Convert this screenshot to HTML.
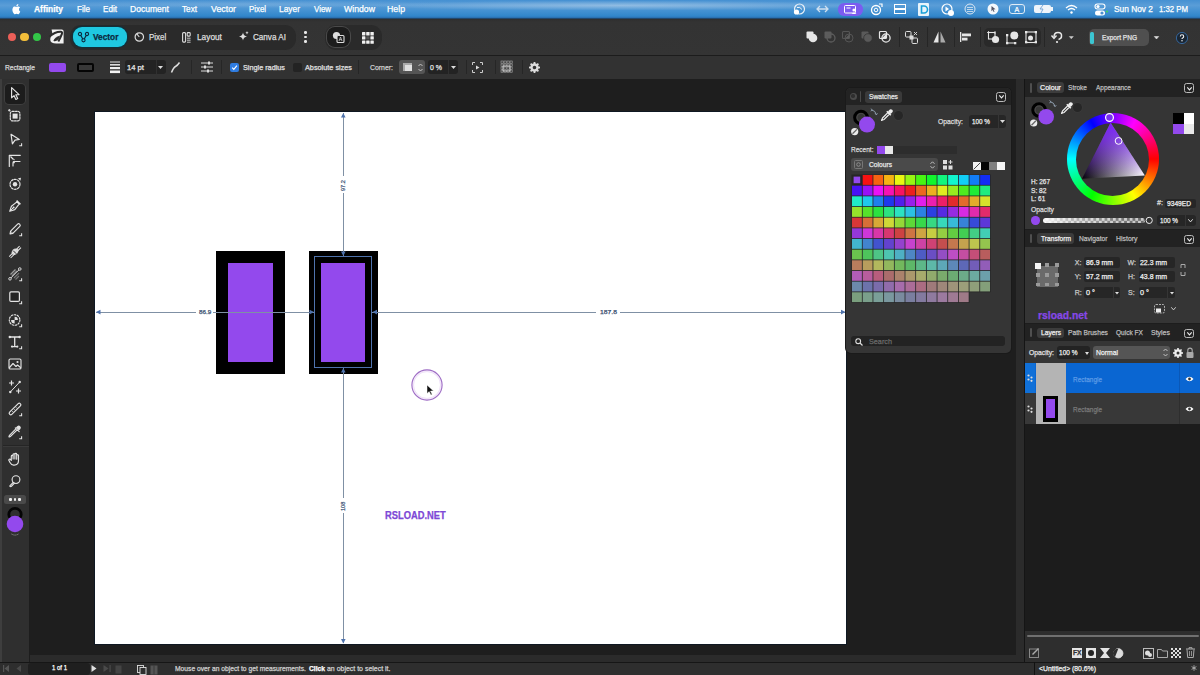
<!DOCTYPE html><html><head><meta charset="utf-8"><style>
html,body{margin:0;padding:0;}
body{width:1200px;height:675px;overflow:hidden;position:relative;background:#2f2f2f;font-family:"Liberation Sans",sans-serif;}
.t{position:absolute;white-space:nowrap;line-height:1;-webkit-text-stroke:0.25px currentColor;}
svg{overflow:visible}
</style></head><body>
<div style="position:absolute;left:0px;top:0px;width:1200px;height:19px;background:radial-gradient(ellipse 260px 5px at 620px 5.5px,rgba(210,225,240,.45),rgba(210,225,240,0)),radial-gradient(ellipse 200px 4px at 250px 4px,rgba(200,220,240,.2),rgba(200,220,240,0)),linear-gradient(180deg,#4590d2 0%,#5a9dd7 28%,#4592d2 55%,#3186ca 85%,#2a70b0 93%,#1d3044 100%);"></div>
<svg style="position:absolute;left:12px;top:4px;" width="11" height="13" viewBox="0 0 11 13"><g transform="scale(0.78)"><path d="M7.4 2.1c.5-.6.8-1.3.7-2.1-.7 0-1.4.5-1.9 1-.4.5-.8 1.3-.7 2 .8.1 1.5-.4 1.9-.9zM8.1 3.2c-1-.1-1.9.6-2.4.6-.5 0-1.3-.5-2.1-.5C2.5 3.3 1.5 4 1 5c-1.1 1.9-.3 4.8.8 6.4.5.8 1.1 1.6 2 1.6.8 0 1.1-.5 2-.5.9 0 1.2.5 2 .5.9 0 1.4-.8 1.9-1.6.6-.9.8-1.7.9-1.8 0 0-1.7-.7-1.7-2.6 0-1.6 1.3-2.3 1.4-2.4-.8-1.1-1.9-1.3-2.2-1.4z" fill="#fff"/></g></svg>
<div class="t" style="left:34px;top:4.85px;font-size:8.6px;color:#fff;font-weight:bold;transform:scaleX(0.979);transform-origin:0 0;">Affinity</div>
<div class="t" style="left:77px;top:4.85px;font-size:8.6px;color:#fff;font-weight:normal;transform:scaleX(0.938);transform-origin:0 0;">File</div>
<div class="t" style="left:103px;top:4.85px;font-size:8.6px;color:#fff;font-weight:normal;transform:scaleX(0.945);transform-origin:0 0;">Edit</div>
<div class="t" style="left:130px;top:4.85px;font-size:8.6px;color:#fff;font-weight:normal;transform:scaleX(0.995);transform-origin:0 0;">Document</div>
<div class="t" style="left:182px;top:4.85px;font-size:8.6px;color:#fff;font-weight:normal;transform:scaleX(0.951);transform-origin:0 0;">Text</div>
<div class="t" style="left:211px;top:4.85px;font-size:8.6px;color:#fff;font-weight:normal;transform:scaleX(1.025);transform-origin:0 0;">Vector</div>
<div class="t" style="left:249px;top:4.85px;font-size:8.6px;color:#fff;font-weight:normal;transform:scaleX(0.912);transform-origin:0 0;">Pixel</div>
<div class="t" style="left:279px;top:4.85px;font-size:8.6px;color:#fff;font-weight:normal;transform:scaleX(0.976);transform-origin:0 0;">Layer</div>
<div class="t" style="left:314px;top:4.85px;font-size:8.6px;color:#fff;font-weight:normal;transform:scaleX(0.920);transform-origin:0 0;">View</div>
<div class="t" style="left:344px;top:4.85px;font-size:8.6px;color:#fff;font-weight:normal;transform:scaleX(1.014);transform-origin:0 0;">Window</div>
<div class="t" style="left:387px;top:4.85px;font-size:8.6px;color:#fff;font-weight:normal;transform:scaleX(1.018);transform-origin:0 0;">Help</div>
<svg style="position:absolute;left:793px;top:3px;" width="13" height="12" viewBox="0 0 13 12"><circle cx="6.5" cy="6" r="5" fill="none" stroke="#e8f0f8" stroke-width="1.2"/><path d="M4 4.5q3 -1 5 2" fill="none" stroke="#e8f0f8" stroke-width="1"/><circle cx="3.5" cy="9" r="2.6" fill="#fff"/></svg>
<svg style="position:absolute;left:816px;top:4px;" width="13" height="10" viewBox="0 0 13 10"><path d="M1 5h11M4 2l-3 3 3 3M9 2l3 3-3 3" fill="none" stroke="#cfe0f0" stroke-width="1.3"/></svg>
<div style="position:absolute;left:838px;top:3px;width:25px;height:13px;background:#7b5cf0;border-radius:6px;"></div>
<svg style="position:absolute;left:844px;top:5px;" width="14" height="9" viewBox="0 0 14 9"><rect x="0.5" y="0.5" width="11" height="7.5" rx="1" fill="none" stroke="#fff" stroke-width="1"/><rect x="2.5" y="2.5" width="4" height="1" fill="#fff"/><circle cx="10" cy="5" r="1.6" fill="#fff"/><path d="M7.5 9q2.5-3 5 0z" fill="#fff"/></svg>
<svg style="position:absolute;left:870px;top:3px;" width="14" height="12" viewBox="0 0 14 12"><circle cx="6" cy="7" r="4.5" fill="none" stroke="#fff" stroke-width="1.3"/><circle cx="6" cy="7" r="1.8" fill="none" stroke="#fff" stroke-width="1"/><path d="M9 1l3 0 0 3" fill="none" stroke="#fff" stroke-width="1.2"/></svg>
<svg style="position:absolute;left:894px;top:4px;" width="13" height="11" viewBox="0 0 13 11"><rect x="0.5" y="0.5" width="11" height="9" fill="none" stroke="#fff" stroke-width="1"/><rect x="0.5" y="4" width="11" height="2" fill="#fff"/></svg>
<div style="position:absolute;left:918px;top:3px;width:11px;height:13px;background:#e8f4fb;border-radius:1px;"></div>
<svg style="position:absolute;left:920px;top:5px;" width="8" height="9" viewBox="0 0 8 9"><path d="M1.5 1h2.5a3 3 0 0 1 0 7h-2.5z" fill="none" stroke="#1aa0d8" stroke-width="1.6"/></svg>
<svg style="position:absolute;left:941px;top:3px;" width="14" height="13" viewBox="0 0 14 13"><circle cx="6" cy="6" r="5" fill="none" stroke="#fff" stroke-width="1.2"/><path d="M4.5 3.5l3.5 2.5-3.5 2.5z" fill="#fff"/><circle cx="10" cy="10" r="3" fill="#fff"/></svg>
<svg style="position:absolute;left:964px;top:3px;" width="12" height="12" viewBox="0 0 12 12"><circle cx="6" cy="6" r="5" fill="none" stroke="#dce8f4" stroke-width="1"/><path d="M3 4.5h6M3 6.5h6M3 8.5h6" stroke="#dce8f4" stroke-width="0.8"/></svg>
<svg style="position:absolute;left:987px;top:3px;" width="12" height="12" viewBox="0 0 12 12"><circle cx="6" cy="6" r="5.5" fill="#f4f8fc"/><path d="M4.5 3l4 3.2-2 .3 1 2.2-.8.4-1-2.2-1.3 1.3z" fill="#556"/></svg>
<div style="position:absolute;left:1009px;top:4px;width:16px;height:10px;border:1px solid #e0ecf6;border-radius:3px;box-sizing:border-box;"></div>
<div class="t" style="left:1014.5px;top:5.83px;font-size:7px;color:#fff;font-weight:normal;">A</div>
<div style="position:absolute;left:1034px;top:5px;width:17px;height:8px;background:#eef4fa;border-radius:2px;"></div>
<div style="position:absolute;left:1051px;top:7px;width:1.5px;height:4px;background:#eef4fa;"></div>
<svg style="position:absolute;left:1038px;top:5px;" width="8" height="8" viewBox="0 0 8 8"><path d="M5 0l-3 4h3l-2 4" fill="none" stroke="#7aa8d8" stroke-width="1"/></svg>
<svg style="position:absolute;left:1065px;top:4px;" width="13" height="10" viewBox="0 0 13 10"><path d="M1 4q5.5-5 11 0" fill="none" stroke="#fff" stroke-width="1.3"/><path d="M3 6q3.5-3 7 0" fill="none" stroke="#fff" stroke-width="1.3"/><circle cx="6.5" cy="8.5" r="1.2" fill="#fff"/></svg>
<svg style="position:absolute;left:1094px;top:3px;" width="14" height="13" viewBox="0 0 14 13"><rect x="1" y="1" width="10" height="5" rx="2.5" fill="none" stroke="#fff" stroke-width="1.1"/><circle cx="4" cy="3.5" r="1.6" fill="#fff"/><rect x="1" y="7.5" width="10" height="5" rx="2.5" fill="#fff"/><circle cx="8" cy="10" r="1.6" fill="#4a8fd0"/><circle cx="13" cy="8.5" r="1.1" fill="#3fd060"/></svg>
<div class="t" style="left:1114px;top:4.85px;font-size:8.6px;color:#fff;font-weight:normal;transform:scaleX(0.971);transform-origin:0 0;">Sun Nov 2</div>
<div class="t" style="left:1159px;top:4.85px;font-size:8.6px;color:#fff;font-weight:normal;transform:scaleX(0.906);transform-origin:0 0;">1:32 PM</div>
<div style="position:absolute;left:0px;top:19px;width:1200px;height:36px;background:linear-gradient(180deg,#2e2e2e 0px,#333 3px,#343434 100%);"></div>
<div style="position:absolute;left:0px;top:55px;width:1200px;height:1px;background:#1c1c1c;"></div>
<div style="position:absolute;left:7.7px;top:32.7px;width:8.6px;height:8.6px;background:#ec5f58;border-radius:50%;"></div>
<div style="position:absolute;left:20.2px;top:32.7px;width:8.6px;height:8.6px;background:#f3be3a;border-radius:50%;"></div>
<div style="position:absolute;left:32.7px;top:32.7px;width:8.6px;height:8.6px;background:#33c748;border-radius:50%;"></div>
<svg style="position:absolute;left:50px;top:29.3px;" width="14" height="15" viewBox="0 0 14 15"><path d="M1.6 0.4H11.8Q13.6 0.4 13.6 2.2V14.6H6.4Q0.2 14.6 0.2 10.2Q0.2 7.2 2.6 5.6L1.6 0.4z" fill="#f2f2f2"/><path d="M-0.5 7.6Q4.5 2.8 10.6 2.7Q12.6 2.8 11.9 4.8Q10.6 8.4 8.3 12.6" fill="none" stroke="#2c2c2c" stroke-width="2"/><path d="M3.4 11.8Q4.4 8.4 10.2 6.4Q9.2 10 7 11.6Q4.8 12.9 3.4 11.8z" fill="#2c2c2c"/></svg>
<div style="position:absolute;left:70px;top:24.5px;width:226px;height:25px;background:#2a2a2a;border-radius:11px;"></div>
<div style="position:absolute;left:73px;top:26.7px;width:54px;height:20px;background:#1fc8e1;border-radius:9px;box-shadow:0 0 0 1.2px #12303a;"></div>
<svg style="position:absolute;left:78px;top:32px;" width="11" height="10" viewBox="0 0 11 10"><path d="M2 2L5.5 8.3M9 2L5.5 8.3" stroke="#0c2a3e" stroke-width="1.2"/><circle cx="2" cy="2" r="1.6" fill="#1fc8e1" stroke="#0c2a3e" stroke-width="1.1"/><circle cx="9" cy="2" r="1.6" fill="#1fc8e1" stroke="#0c2a3e" stroke-width="1.1"/><circle cx="5.5" cy="8.3" r="1.6" fill="#1fc8e1" stroke="#0c2a3e" stroke-width="1.1"/></svg>
<div class="t" style="left:93.3px;top:32.85px;font-size:8.6px;color:#0c2a40;font-weight:bold;transform:scaleX(0.966);transform-origin:0 0;">Vector</div>
<svg style="position:absolute;left:134px;top:32px;" width="11" height="10" viewBox="0 0 11 10"><circle cx="5.3" cy="5" r="4.2" fill="none" stroke="#ddd" stroke-width="1.2"/><path d="M5.3 5L3 2.2" stroke="#ddd" stroke-width="1.1"/></svg>
<div class="t" style="left:148.7px;top:32.95px;font-size:8.4px;color:#ddd;font-weight:normal;transform:scaleX(0.950);transform-origin:0 0;">Pixel</div>
<svg style="position:absolute;left:182px;top:31.5px;" width="9" height="11" viewBox="0 0 9 11"><rect x="0.6" y="0.6" width="3" height="9.5" rx="1" fill="none" stroke="#ddd" stroke-width="1.1"/><rect x="5.2" y="0.6" width="3" height="3.5" rx=".8" fill="none" stroke="#ddd" stroke-width="1.1"/><path d="M5 6.2h3.6M5 8.2h3.6M5 10.2h3.6" stroke="#ddd" stroke-width="0.9"/></svg>
<div class="t" style="left:197px;top:32.95px;font-size:8.4px;color:#ddd;font-weight:normal;transform:scaleX(0.991);transform-origin:0 0;">Layout</div>
<svg style="position:absolute;left:238px;top:31px;" width="11" height="11" viewBox="0 0 11 11"><path d="M5 1.5q.5 3.5 4 4q-3.5.5-4 4q-.5-3.5-4-4q3.5-.5 4-4z" fill="#ddd"/><path d="M9 0q.2 1.5 1.6 1.7q-1.4.2-1.6 1.7q-.2-1.5-1.6-1.7q1.4-.2 1.6-1.7z" fill="#ddd"/></svg>
<div class="t" style="left:253px;top:32.95px;font-size:8.4px;color:#ddd;font-weight:normal;transform:scaleX(0.968);transform-origin:0 0;">Canva AI</div>
<div style="position:absolute;left:304.3px;top:31.400000000000002px;width:2.5px;height:2.5px;background:#e8e8e8;border-radius:50%;"></div>
<div style="position:absolute;left:304.3px;top:35.9px;width:2.5px;height:2.5px;background:#e8e8e8;border-radius:50%;"></div>
<div style="position:absolute;left:304.3px;top:40.4px;width:2.5px;height:2.5px;background:#e8e8e8;border-radius:50%;"></div>
<div style="position:absolute;left:325px;top:24.5px;width:57px;height:25px;background:#2a2a2a;border-radius:11px;"></div>
<div style="position:absolute;left:327px;top:27px;width:23px;height:20px;background:#1c1c1c;border-radius:8px;box-shadow:0 0 0 1px #4a4a4a;"></div>
<svg style="position:absolute;left:332px;top:31px;" width="13" height="12" viewBox="0 0 13 12"><circle cx="4.5" cy="4.5" r="3.6" fill="#ddd"/><rect x="5" y="4.5" width="7" height="7" rx="1" fill="#1c1c1c" stroke="#ddd" stroke-width="1.1"/><path d="M7 10l1.5-4 1.5 4M7.6 8.6h1.8" stroke="#ddd" stroke-width=".7" fill="none"/></svg>
<svg style="position:absolute;left:361.5px;top:31.5px;" width="12" height="12" viewBox="0 0 12 12"><rect x="0" y="0" width="3.4" height="3.4" rx=".5" fill="#f0f0f0"/><rect x="0" y="4.2" width="3.4" height="3.4" rx=".5" fill="#f0f0f0"/><rect x="0" y="8.4" width="3.4" height="3.4" rx=".5" fill="#f0f0f0"/><rect x="4.2" y="0" width="3.4" height="3.4" rx=".5" fill="#f0f0f0"/><rect x="4.2" y="4.2" width="3.4" height="3.4" rx=".5" fill="#555"/><rect x="4.2" y="8.4" width="3.4" height="3.4" rx=".5" fill="#f0f0f0"/><rect x="8.4" y="0" width="3.4" height="3.4" rx=".5" fill="#f0f0f0"/><rect x="8.4" y="4.2" width="3.4" height="3.4" rx=".5" fill="#f0f0f0"/><rect x="8.4" y="8.4" width="3.4" height="3.4" rx=".5" fill="#f0f0f0"/></svg>
<svg style="position:absolute;left:806px;top:31px;" width="12" height="12" viewBox="0 0 12 12"><rect x="0.5" y="0.5" width="7" height="7" rx="1" fill="#e6e6e6"/><circle cx="7" cy="7" r="4.3" fill="#e6e6e6"/></svg>
<svg style="position:absolute;left:824px;top:31px;" width="12" height="12" viewBox="0 0 12 12"><rect x="0.5" y="0.5" width="7" height="7" rx="1" fill="#5c5c5c"/><circle cx="7" cy="7" r="4" fill="none" stroke="#5c5c5c" stroke-width="1.3"/></svg>
<svg style="position:absolute;left:842px;top:31px;" width="12" height="12" viewBox="0 0 12 12"><rect x="0.5" y="0.5" width="7" height="7" rx="1" fill="none" stroke="#555" stroke-width="1.1"/><path d="M3 7.5h4.5V3" fill="#5c5c5c"/><circle cx="7" cy="7" r="4" fill="none" stroke="#555" stroke-width="1"/></svg>
<svg style="position:absolute;left:861px;top:31px;" width="12" height="12" viewBox="0 0 12 12"><rect x="0.5" y="0.5" width="7" height="7" rx="1" fill="#5a5a5a"/><circle cx="7" cy="7" r="4.3" fill="#5a5a5a" stroke="#333" stroke-width=".8"/></svg>
<svg style="position:absolute;left:879px;top:31px;" width="12" height="12" viewBox="0 0 12 12"><rect x="0.5" y="0.5" width="7" height="7" rx="1" fill="none" stroke="#e6e6e6" stroke-width="1.2"/><circle cx="7" cy="7" r="4.1" fill="none" stroke="#e6e6e6" stroke-width="1.3"/><path d="M3 7h4V3z" fill="#e6e6e6"/></svg>
<div style="position:absolute;left:899px;top:27px;width:1px;height:20px;background:#262626;"></div>
<svg style="position:absolute;left:905px;top:31px;" width="14" height="13" viewBox="0 0 14 13"><rect x="0.5" y="0.5" width="5.5" height="5.5" rx="1" fill="none" stroke="#ddd" stroke-width="1"/><rect x="4.5" y="4.5" width="4" height="4" fill="#ddd"/><rect x="7" y="7" width="5.5" height="5.5" rx="1" fill="none" stroke="#ddd" stroke-width="1"/><path d="M9 1l3 3M12 1l-3 3" stroke="#ddd" stroke-width=".9"/></svg>
<div style="position:absolute;left:927px;top:27px;width:1px;height:20px;background:#262626;"></div>
<svg style="position:absolute;left:933px;top:31px;" width="13" height="12" viewBox="0 0 13 12"><path d="M5.5 0.5L0.5 11.5h5z" fill="#e6e6e6"/><path d="M7.5 0.5l5 11h-5z" fill="#aaa"/></svg>
<div style="position:absolute;left:954px;top:27px;width:1px;height:20px;background:#262626;"></div>
<svg style="position:absolute;left:960px;top:32px;" width="12" height="10" viewBox="0 0 12 10"><rect x="0" y="0" width="1.3" height="10" fill="#e6e6e6"/><rect x="2" y="1.5" width="9" height="2.8" fill="#e6e6e6"/><rect x="2" y="5.7" width="5.5" height="2.8" fill="#e6e6e6"/></svg>
<div style="position:absolute;left:980px;top:27px;width:1px;height:20px;background:#262626;"></div>
<div style="position:absolute;left:983.5px;top:28px;width:57px;height:18.5px;background:#292929;border-radius:5px;"></div>
<svg style="position:absolute;left:987px;top:31px;" width="13" height="13" viewBox="0 0 13 13"><rect x="1.5" y="1.5" width="6.5" height="6.5" fill="none" stroke="#e6e6e6" stroke-width="1.1"/><circle cx="8.5" cy="8.5" r="3.6" fill="#e6e6e6"/><path d="M1.5 0v3M0 1.5h3M8 0v3" stroke="#e6e6e6" stroke-width=".8"/></svg>
<svg style="position:absolute;left:1006px;top:31px;" width="13" height="13" viewBox="0 0 13 13"><circle cx="8.3" cy="4.5" r="4" fill="#e6e6e6"/><path d="M1 4v8h8" fill="none" stroke="#e6e6e6" stroke-width="1.1"/><rect x="0" y="3" width="2.3" height="2.3" fill="#e6e6e6"/><rect x="0" y="11" width="2.3" height="2.3" fill="#e6e6e6"/><rect x="8" y="11" width="2.3" height="2.3" fill="#e6e6e6"/></svg>
<svg style="position:absolute;left:1025px;top:31px;" width="12" height="13" viewBox="0 0 12 13"><rect x="1" y="1" width="10" height="10.5" fill="none" stroke="#e6e6e6" stroke-width="1.1"/><rect x="0" y="0" width="2.3" height="2.3" fill="#e6e6e6"/><rect x="9.7" y="0" width="2.3" height="2.3" fill="#e6e6e6"/><rect x="0" y="10" width="2.3" height="2.3" fill="#e6e6e6"/><rect x="9.7" y="10" width="2.3" height="2.3" fill="#e6e6e6"/><circle cx="5.5" cy="7" r="2.5" fill="#e6e6e6"/></svg>
<div style="position:absolute;left:1044px;top:27px;width:1px;height:20px;background:#262626;"></div>
<svg style="position:absolute;left:1051px;top:31px;" width="13" height="12" viewBox="0 0 13 12"><path d="M3 6q0-4.5 4-4.5t3.5 3.8q0 2.5-3 3.2" fill="none" stroke="#e8e8e8" stroke-width="1.5"/><path d="M0.5 4.5l2.5 3 2.5-3" fill="none" stroke="#e8e8e8" stroke-width="1.4"/><circle cx="6" cy="11" r="1.1" fill="#e8e8e8"/></svg>
<svg style="position:absolute;left:1068.5px;top:36px;" width="5" height="4" viewBox="0 0 5 4"><path d="M0.3 0.5l2 2.3 2-2.3z" fill="#ccc" stroke="#ccc" stroke-width=".5"/></svg>
<div style="position:absolute;left:1088.8px;top:29px;width:60.5px;height:17px;background:#4f4f4f;border-radius:5px;"></div>
<div style="position:absolute;left:1090.3px;top:32px;width:3.6px;height:12px;background:#3cc6d2;border-radius:1.5px;"></div>
<div class="t" style="left:1101.5px;top:33.98px;font-size:7.3px;color:#e4e4e4;font-weight:normal;transform:scaleX(0.899);transform-origin:0 0;">Export PNG</div>
<svg style="position:absolute;left:1153.5px;top:36px;" width="5" height="4" viewBox="0 0 5 4"><path d="M0.3 0.5l2.2 2.5 2.2-2.5z" fill="#ddd" stroke="#ddd" stroke-width=".6"/></svg>
<svg style="position:absolute;left:1175px;top:31px;" width="14" height="14" viewBox="0 0 14 14"><circle cx="7" cy="7" r="5.6" fill="#1a2633" stroke="#35659a" stroke-width="1"/><path d="M5.3 5.6q0-1.8 1.7-1.8t1.7 1.6q0 1-1.1 1.6q-.6.3-.6 1.1" fill="none" stroke="#f0f0f0" stroke-width="1.1"/><circle cx="7" cy="9.8" r=".75" fill="#f0f0f0"/></svg>
<div style="position:absolute;left:0px;top:56px;width:1200px;height:22.5px;background:#323232;"></div>
<div style="position:absolute;left:0px;top:78.5px;width:1200px;height:1px;background:#1a1a1a;"></div>
<div class="t" style="left:5px;top:64.13px;font-size:7px;color:#d8d8d8;font-weight:normal;transform:scaleX(0.952);transform-origin:0 0;">Rectangle</div>
<div style="position:absolute;left:49px;top:62.5px;width:17px;height:9.5px;background:#9349ed;border-radius:2px;"></div>
<div style="position:absolute;left:77px;top:62.5px;width:17px;height:9.5px;background:#383838;border:2px solid #050505;border-radius:2px;box-sizing:border-box;"></div>
<svg style="position:absolute;left:110px;top:61px;" width="10" height="12" viewBox="0 0 10 12"><rect x="0" y="0.5" width="10" height="1" fill="#ddd"/><rect x="0" y="3" width="10" height="1.6" fill="#ddd"/><rect x="0" y="6" width="10" height="2.2" fill="#eee"/><rect x="0" y="9.5" width="10" height="2.6" fill="#f2f2f2"/></svg>
<div style="position:absolute;left:125px;top:60px;width:40.5px;height:14px;background:#232323;border-radius:3px;"></div>
<div style="position:absolute;left:155.5px;top:60px;width:1px;height:14px;background:#303030;"></div>
<div class="t" style="left:127px;top:63.68px;font-size:7.3px;color:#e6e6e6;font-weight:normal;transform:scaleX(1.047);transform-origin:0 0;">14 pt</div>
<svg style="position:absolute;left:158px;top:65.5px;" width="5" height="3" viewBox="0 0 5 3"><path d="M0 0h5l-2.5 3z" fill="#ddd"/></svg>
<svg style="position:absolute;left:171px;top:61.5px;" width="9" height="11" viewBox="0 0 9 11"><path d="M0.5 10.5q2-5 4-6t4-4" fill="none" stroke="#ddd" stroke-width="1.5"/></svg>
<div style="position:absolute;left:191px;top:60px;width:1px;height:14px;background:#262626;"></div>
<svg style="position:absolute;left:201px;top:61px;" width="12" height="12" viewBox="0 0 12 12"><path d="M0 2h12M0 6h12M0 10h12" stroke="#ddd" stroke-width="1"/><rect x="7" y="0.5" width="2" height="3" fill="#ddd"/><rect x="3" y="4.5" width="2" height="3" fill="#ddd"/><rect x="6" y="8.5" width="2" height="3" fill="#ddd"/></svg>
<div style="position:absolute;left:221px;top:60px;width:1px;height:14px;background:#262626;"></div>
<div style="position:absolute;left:229.5px;top:62.7px;width:9px;height:9px;background:#2f7ce0;border-radius:2px;"></div>
<svg style="position:absolute;left:230.5px;top:63.7px;" width="7" height="7" viewBox="0 0 7 7"><path d="M1.2 3.6l1.6 1.7 3.1-3.7" fill="none" stroke="#fff" stroke-width="1.1"/></svg>
<div class="t" style="left:243px;top:63.78px;font-size:7.3px;color:#e0e0e0;font-weight:normal;transform:scaleX(0.995);transform-origin:0 0;">Single radius</div>
<div style="position:absolute;left:292.5px;top:62.7px;width:9px;height:9px;background:#232323;border-radius:2px;"></div>
<div class="t" style="left:305px;top:63.78px;font-size:7.3px;color:#e0e0e0;font-weight:normal;transform:scaleX(0.999);transform-origin:0 0;">Absolute sizes</div>
<div style="position:absolute;left:358px;top:60px;width:1px;height:14px;background:#262626;"></div>
<div class="t" style="left:370px;top:63.78px;font-size:7.3px;color:#d0d0d0;font-weight:normal;transform:scaleX(0.945);transform-origin:0 0;">Corner:</div>
<div style="position:absolute;left:398.5px;top:60px;width:26px;height:14px;background:#555555;border-radius:3px;"></div>
<div style="position:absolute;left:403px;top:63px;width:9px;height:8px;background:#e0e0e0;"></div>
<div style="position:absolute;left:403px;top:63px;width:9px;height:2px;background:#aaa;"></div>
<div style="position:absolute;left:403px;top:63px;width:2px;height:8px;background:#aaa;"></div>
<svg style="position:absolute;left:418px;top:62.5px;" width="5" height="9" viewBox="0 0 5 9"><path d="M0.5 3l2-2 2 2M0.5 6l2 2 2-2" fill="none" stroke="#ccc" stroke-width=".9"/></svg>
<div style="position:absolute;left:428px;top:60px;width:29.5px;height:14px;background:#232323;border-radius:3px;"></div>
<div style="position:absolute;left:448px;top:60px;width:1px;height:14px;background:#303030;"></div>
<div class="t" style="left:430px;top:63.78px;font-size:7.3px;color:#e6e6e6;font-weight:normal;transform:scaleX(0.954);transform-origin:0 0;">0 %</div>
<svg style="position:absolute;left:451px;top:65.5px;" width="5" height="3" viewBox="0 0 5 3"><path d="M0 0h5l-2.5 3z" fill="#ddd"/></svg>
<div style="position:absolute;left:466px;top:60px;width:1px;height:14px;background:#262626;"></div>
<svg style="position:absolute;left:472px;top:61.5px;" width="11" height="11" viewBox="0 0 11 11"><path d="M0.5 3V0.5H3M8 0.5h2.5V3M10.5 8v2.5H8M3 10.5H0.5V8" fill="none" stroke="#ccc" stroke-width="1"/><path d="M4 3.5l3.5 2-3.5 2z" fill="#ddd"/></svg>
<div style="position:absolute;left:495px;top:60px;width:1px;height:14px;background:#262626;"></div>
<svg style="position:absolute;left:501px;top:61px;" width="11" height="12" viewBox="0 0 11 12"><rect x="0" y="0" width="2.2" height="2.2" fill="none" stroke="#aaa" stroke-width=".6"/><rect x="0" y="3" width="2.2" height="2.2" fill="none" stroke="#aaa" stroke-width=".6"/><rect x="0" y="6" width="2.2" height="2.2" fill="none" stroke="#aaa" stroke-width=".6"/><rect x="0" y="9" width="2.2" height="2.2" fill="none" stroke="#aaa" stroke-width=".6"/><rect x="3" y="0" width="2.2" height="2.2" fill="none" stroke="#aaa" stroke-width=".6"/><rect x="3" y="3" width="2.2" height="2.2" fill="none" stroke="#aaa" stroke-width=".6"/><rect x="3" y="6" width="2.2" height="2.2" fill="none" stroke="#aaa" stroke-width=".6"/><rect x="3" y="9" width="2.2" height="2.2" fill="none" stroke="#aaa" stroke-width=".6"/><rect x="6" y="0" width="2.2" height="2.2" fill="none" stroke="#aaa" stroke-width=".6"/><rect x="6" y="3" width="2.2" height="2.2" fill="none" stroke="#aaa" stroke-width=".6"/><rect x="6" y="6" width="2.2" height="2.2" fill="none" stroke="#aaa" stroke-width=".6"/><rect x="6" y="9" width="2.2" height="2.2" fill="none" stroke="#aaa" stroke-width=".6"/><rect x="9" y="0" width="2.2" height="2.2" fill="none" stroke="#aaa" stroke-width=".6"/><rect x="9" y="3" width="2.2" height="2.2" fill="none" stroke="#aaa" stroke-width=".6"/><rect x="9" y="6" width="2.2" height="2.2" fill="none" stroke="#aaa" stroke-width=".6"/><rect x="9" y="9" width="2.2" height="2.2" fill="none" stroke="#aaa" stroke-width=".6"/><rect x="2" y="5" width="7" height="5" fill="none" stroke="#ddd" stroke-width=".8"/></svg>
<div style="position:absolute;left:522px;top:60px;width:1px;height:14px;background:#262626;"></div>
<svg style="position:absolute;left:529px;top:62px;" width="11" height="11" viewBox="0 0 11 11"><circle cx="5.5" cy="5.5" r="3" fill="none" stroke="#ddd" stroke-width="2.4"/><rect x="4.6" y="0" width="1.8" height="2.4" fill="#ddd" transform="rotate(0 5.5 5.5)"/><rect x="4.6" y="0" width="1.8" height="2.4" fill="#ddd" transform="rotate(45 5.5 5.5)"/><rect x="4.6" y="0" width="1.8" height="2.4" fill="#ddd" transform="rotate(90 5.5 5.5)"/><rect x="4.6" y="0" width="1.8" height="2.4" fill="#ddd" transform="rotate(135 5.5 5.5)"/><rect x="4.6" y="0" width="1.8" height="2.4" fill="#ddd" transform="rotate(180 5.5 5.5)"/><rect x="4.6" y="0" width="1.8" height="2.4" fill="#ddd" transform="rotate(225 5.5 5.5)"/><rect x="4.6" y="0" width="1.8" height="2.4" fill="#ddd" transform="rotate(270 5.5 5.5)"/><rect x="4.6" y="0" width="1.8" height="2.4" fill="#ddd" transform="rotate(315 5.5 5.5)"/></svg>
<div style="position:absolute;left:0px;top:79px;width:29px;height:583px;background:#2f2f2f;"></div>
<div style="position:absolute;left:0px;top:79px;width:1.5px;height:583px;background:#3e3e3e;"></div>
<div style="position:absolute;left:29px;top:79px;width:1px;height:583px;background:#1d1d1d;"></div>
<div style="position:absolute;left:5.3px;top:83.8px;width:19.6px;height:20.2px;background:#1c1c1c;border-radius:4px;box-shadow:0 0 0 1px #3e3e3e;"></div>
<svg style="position:absolute;left:7px;top:85px;" width="16" height="16" viewBox="0 0 16 16"><path d="M4.6 2.6V12.8L7 10.6l1.9 3.9 1.8-.9-1.9-3.8 3.3-.2z" stroke="#e4e4e4" stroke-width="1.15" fill="none" stroke-linejoin="round" stroke-linecap="round"/></svg>
<svg style="position:absolute;left:7px;top:108px;" width="16" height="16" viewBox="0 0 16 16"><rect x="3.3" y="3.3" width="9.6" height="9.6" rx="2.2" stroke="#e4e4e4" stroke-width="1.15" fill="none" stroke-linejoin="round" stroke-linecap="round" stroke-dasharray="1.8 1.2"/><rect x="5.6" y="5.6" width="5" height="5" fill="#e4e4e4"/><path d="M1 2.3h2.6M2.3 1v2.6" stroke="#e4e4e4" stroke-width=".9"/></svg>
<svg style="position:absolute;left:7px;top:131px;" width="16" height="16" viewBox="0 0 16 16"><path d="M4 3.2l8.3 5.3-4.3.6-2.6 3.8z" stroke="#e4e4e4" stroke-width="1.15" fill="none" stroke-linejoin="round" stroke-linecap="round"/><path d="M14.6 12.3v2.4h-2.4" fill="none" stroke="#e4e4e4" stroke-width="1.1"/></svg>
<svg style="position:absolute;left:7px;top:153px;" width="16" height="16" viewBox="0 0 16 16"><path d="M2.3 13.5V2.3h11" stroke="#e4e4e4" stroke-width="1.15" fill="none" stroke-linejoin="round" stroke-linecap="round"/><path d="M3.5 3.5l3 3" stroke="#e4e4e4" stroke-width="1.2"/><path d="M6.2 6.5l1.5-.4-.4 1.5z" fill="#e4e4e4"/><path d="M6 13V10.5q0-2 2-2h5" stroke="#e4e4e4" stroke-width="1.15" fill="none" stroke-linejoin="round" stroke-linecap="round"/><rect x="5.8" y="8.2" width="2" height="2" fill="#e4e4e4"/></svg>
<svg style="position:absolute;left:7px;top:176px;" width="16" height="16" viewBox="0 0 16 16"><circle cx="8" cy="8.3" r="5" stroke="#e4e4e4" stroke-width="1.15" fill="none" stroke-linejoin="round" stroke-linecap="round" stroke-dasharray="1.9 1.3"/><circle cx="8" cy="8.3" r="2.2" fill="#e4e4e4"/><path d="M11 2.3l3-.5-.6 2.9z" fill="#e4e4e4"/></svg>
<svg style="position:absolute;left:7px;top:198px;" width="16" height="16" viewBox="0 0 16 16"><path d="M2.8 13.2l1.6-5 5.5-4.3 2.2 2.2-4.3 5.5z" stroke="#e4e4e4" stroke-width="1.15" fill="none" stroke-linejoin="round" stroke-linecap="round"/><path d="M2.8 13.2l3.3-3.3" stroke="#e4e4e4" stroke-width="1"/><circle cx="6.6" cy="9.4" r="1" fill="#e4e4e4"/><path d="M9.6 2.6l3.8 3.8" stroke="#e4e4e4" stroke-width="1.5"/></svg>
<svg style="position:absolute;left:7px;top:221px;" width="16" height="16" viewBox="0 0 16 16"><path d="M3 13l.6-2.8 7-7q1-1 2 0l.2.2q1 1 0 2l-7 7z" stroke="#e4e4e4" stroke-width="1.15" fill="none" stroke-linejoin="round" stroke-linecap="round"/><path d="M3.7 10.3l2 2" stroke="#e4e4e4" stroke-width=".9"/><path d="M14.6 12.3v2.4h-2.4" fill="none" stroke="#e4e4e4" stroke-width="1.1"/></svg>
<svg style="position:absolute;left:7px;top:244px;" width="16" height="16" viewBox="0 0 16 16"><path d="M2.2 12.6L12.6 2.2M3.6 14L14 3.6" stroke="#e4e4e4" stroke-width="1.05"/><path d="M4.5 8.5q1-4 4-4q3 0 3 1.5q0 4-4 5q-3 0-3-2.5z" fill="#e4e4e4" opacity=".9"/><path d="M6.3 6.8l3 3" stroke="#2f2f2f" stroke-width="1"/></svg>
<svg style="position:absolute;left:7px;top:266px;" width="16" height="16" viewBox="0 0 16 16"><path d="M3 12.8L12.8 3" stroke="#e4e4e4" stroke-width="1"/><circle cx="3" cy="12.8" r="1.3" fill="#2f2f2f" stroke="#e4e4e4" stroke-width=".9"/><circle cx="12.8" cy="3" r="1.3" fill="#2f2f2f" stroke="#e4e4e4" stroke-width=".9"/><path d="M3.5 8.5l5-5M5 10l5-5" stroke="#9a9a9a" stroke-width="1.3"/><path d="M7 12l5-5M8.5 13.5l3.5-3.5" stroke="#777" stroke-width="1.2"/><path d="M14.6 12.3v2.4h-2.4" fill="none" stroke="#e4e4e4" stroke-width="1.1"/></svg>
<svg style="position:absolute;left:7px;top:289px;" width="16" height="16" viewBox="0 0 16 16"><rect x="2.8" y="2.8" width="9.6" height="9.6" rx="1.2" fill="#232323" stroke="#e4e4e4" stroke-width="1.2"/><path d="M14.6 12.3v2.4h-2.4" fill="none" stroke="#e4e4e4" stroke-width="1.1"/></svg>
<svg style="position:absolute;left:7px;top:312px;" width="16" height="16" viewBox="0 0 16 16"><circle cx="7.6" cy="8" r="5.3" stroke="#e4e4e4" stroke-width="1.15" fill="none" stroke-linejoin="round" stroke-linecap="round" stroke-dasharray="1.5 1.5"/><path d="M7.6 8V4.5a3.5 3.5 0 0 1 3.5 3.5z" fill="#e4e4e4" transform="rotate(180 7.6 8)"/><path d="M7.6 8H4.3A3.3 3.3 0 0 0 7.6 11.3z" fill="#e4e4e4" transform="rotate(180 7.6 8)"/><path d="M14.6 12.3v2.4h-2.4" fill="none" stroke="#e4e4e4" stroke-width="1.1"/></svg>
<svg style="position:absolute;left:7px;top:334px;" width="16" height="16" viewBox="0 0 16 16"><path d="M2.8 3h9.8M7.7 3v9.6M5.3 12.6h4.8" stroke="#e4e4e4" stroke-width="1.3"/><circle cx="2.8" cy="3" r="1.2" fill="#e4e4e4"/><circle cx="12.6" cy="3" r="1.2" fill="#e4e4e4"/><circle cx="5" cy="12.6" r="1.1" fill="#e4e4e4"/><circle cx="10.3" cy="12.6" r="1.1" fill="#e4e4e4"/><path d="M14.6 12.3v2.4h-2.4" fill="none" stroke="#e4e4e4" stroke-width="1.1"/></svg>
<svg style="position:absolute;left:7px;top:356px;" width="16" height="16" viewBox="0 0 16 16"><rect x="2" y="3" width="12" height="10" rx="1.3" stroke="#e4e4e4" stroke-width="1.15" fill="none" stroke-linejoin="round" stroke-linecap="round"/><path d="M2.5 11.5l3.5-4 3 3 1.5-1.5 3 2.5" stroke="#e4e4e4" stroke-width="1.15" fill="none" stroke-linejoin="round" stroke-linecap="round"/><circle cx="10.5" cy="6" r="1.1" fill="#e4e4e4"/></svg>
<svg style="position:absolute;left:7px;top:379px;" width="16" height="16" viewBox="0 0 16 16"><path d="M4.5 1.5v5M2 4h5M11.5 9.5v5M9 12h5" stroke="#e4e4e4" stroke-width="1.2"/><path d="M3.3 13L12.7 3" stroke="#e4e4e4" stroke-width="1"/><circle cx="3.3" cy="13" r="1.2" fill="#e4e4e4"/><circle cx="12.7" cy="3" r="1.2" fill="#e4e4e4"/></svg>
<svg style="position:absolute;left:7px;top:401px;" width="16" height="16" viewBox="0 0 16 16"><path d="M2.6 11.2l8.6-8.6q1-1 2 0l.2.2q1 1 0 2l-8.6 8.6q-1 1-2 0l-.2-.2q-1-1 0-2z" stroke="#e4e4e4" stroke-width="1.15" fill="none" stroke-linejoin="round" stroke-linecap="round"/><path d="M5.3 10.2l1 1M7.2 8.3l1 1M9.1 6.4l1 1" stroke="#e4e4e4" stroke-width=".9"/><path d="M14.6 12.3v2.4h-2.4" fill="none" stroke="#e4e4e4" stroke-width="1.1"/></svg>
<svg style="position:absolute;left:7px;top:424px;" width="16" height="16" viewBox="0 0 16 16"><path d="M10.2 2.2q1.6-1.4 3 0t0 3l-1.3 1.2-3-3z" fill="#e4e4e4"/><path d="M8.3 3.8l3.9 3.9M10.2 5.8l-6.4 6.4q-1 1-1.8.7-.3-.8.7-1.8l6.4-6.4" stroke="#e4e4e4" stroke-width="1.15" fill="none" stroke-linejoin="round" stroke-linecap="round"/><path d="M14.6 12.3v2.4h-2.4" fill="none" stroke="#e4e4e4" stroke-width="1.1"/></svg>
<svg style="position:absolute;left:7px;top:451px;" width="16" height="16" viewBox="0 0 16 16"><path d="M4.3 9.5V5.2q0-.9.9-.9t.9.9V8V3.6q0-.9.9-.9t.9.9V8V3.2q0-.9.9-.9t.9.9V8.2V4.6q0-.9.9-.9t.9.9v5q0 4.5-4.3 4.5h-.6q-2.2 0-3.6-2.6L2 9.6q-.6-1 .3-1.4t1.6.8z" stroke="#e4e4e4" stroke-width="1.15" fill="none" stroke-linejoin="round" stroke-linecap="round" stroke-width="1.05"/></svg>
<svg style="position:absolute;left:7px;top:473px;" width="16" height="16" viewBox="0 0 16 16"><circle cx="9" cy="6.6" r="3.9" stroke="#e4e4e4" stroke-width="1.15" fill="none" stroke-linejoin="round" stroke-linecap="round"/><path d="M6.2 9.5L3.3 12.4q-.9.9 0 1.1.3.5 1.1-.2l2.9-2.9" stroke="#e4e4e4" stroke-width="1.15" fill="none" stroke-linejoin="round" stroke-linecap="round"/></svg>
<div style="position:absolute;left:3px;top:444.5px;width:26px;height:1px;background:#252525;"></div>
<div style="position:absolute;left:3px;top:445.5px;width:26px;height:1px;background:#3a3a3a;"></div>
<div style="position:absolute;left:3.5px;top:495px;width:22.2px;height:9px;background:#4a4a4a;border-radius:2.5px;"></div>
<div style="position:absolute;left:9.4px;top:498.4px;width:2.2px;height:2.2px;background:#f0f0f0;border-radius:50%;"></div>
<div style="position:absolute;left:13.9px;top:498.4px;width:2.2px;height:2.2px;background:#f0f0f0;border-radius:50%;"></div>
<div style="position:absolute;left:18.4px;top:498.4px;width:2.2px;height:2.2px;background:#f0f0f0;border-radius:50%;"></div>
<svg style="position:absolute;left:4px;top:505px;" width="22" height="32" viewBox="0 0 22 32"><circle cx="11" cy="9.5" r="6.2" fill="none" stroke="#050505" stroke-width="2.8"/><circle cx="11" cy="19" r="8.3" fill="#9349ed"/><path d="M7.5 29q3.5 2.2 7 0" fill="none" stroke="#9a9a9a" stroke-width=".9" stroke-dasharray="1.2 .8"/></svg>
<div style="position:absolute;left:30px;top:79px;width:986px;height:576px;background:#1e1e1e;"></div>
<div style="position:absolute;left:1016px;top:79px;width:8px;height:583px;background:#2b2b2b;"></div>
<div style="position:absolute;left:30px;top:655px;width:986px;height:7px;background:#2b2b2b;"></div>
<div style="position:absolute;left:94px;top:111px;width:753px;height:534px;background:#0f1822;"></div>
<div style="position:absolute;left:95px;top:112px;width:751px;height:532px;background:#ffffff;"></div>
<div style="position:absolute;left:216px;top:251px;width:69px;height:123px;background:#000;"></div>
<div style="position:absolute;left:228px;top:263px;width:45px;height:99px;background:#9349ed;"></div>
<div style="position:absolute;left:309px;top:251px;width:69px;height:123px;background:#000;"></div>
<div style="position:absolute;left:321px;top:263px;width:44px;height:99px;background:#9349ed;"></div>
<div style="position:absolute;left:314px;top:256px;width:58px;height:112px;border:1px solid #4f73ad;box-sizing:border-box;"></div>
<div style="position:absolute;left:96px;top:312px;width:218px;height:1px;background:#7f90a4;"></div>
<div style="position:absolute;left:372px;top:312px;width:473px;height:1px;background:#7f90a4;"></div>
<div style="position:absolute;left:343px;top:113px;width:1px;height:143px;background:#7f90a4;"></div>
<div style="position:absolute;left:343px;top:368px;width:1px;height:275px;background:#7f90a4;"></div>
<svg style="position:absolute;left:0px;top:0px;" width="1" height="1" viewBox="0 0 1 1"><path d="M96 312.1l4.5-2.3v4.6z" fill="#4f73ad"/><path d="M314 312.1l-4.5-2.3v4.6z" fill="#4f73ad"/><path d="M372.5 312.1l4.5-2.3v4.6z" fill="#4f73ad"/><path d="M845.5 312.1l-4.5-2.3v4.6z" fill="#4f73ad"/><path d="M343.3 113l-2.3 4.5h4.6z" fill="#4f73ad"/><path d="M343.3 256l-2.3-4.5h4.6z" fill="#4f73ad"/><path d="M343.3 368l-2.3 4.5h4.6z" fill="#4f73ad"/><path d="M343.3 643.5l-2.3-4.5h4.6z" fill="#4f73ad"/></svg>
<div style="position:absolute;left:196px;top:308px;width:17px;height:8px;background:#fff;"></div>
<div class="t" style="left:198.5px;top:309.60px;font-size:5.6px;color:#3d5272;font-weight:normal;transform:scaleX(1.129);transform-origin:0 0;">86.9</div>
<div style="position:absolute;left:596px;top:308px;width:24px;height:8px;background:#fff;"></div>
<div class="t" style="left:599.5px;top:309.60px;font-size:5.6px;color:#3d5272;font-weight:normal;transform:scaleX(1.213);transform-origin:0 0;">187.8</div>
<div style="position:absolute;left:339px;top:176px;width:8px;height:17px;background:#fff;"></div>
<div class="t" style="left:341px;top:190.5px;font-size:5.6px;color:#4a5e80;transform:rotate(-90deg);transform-origin:0 0;">97.2</div>
<div style="position:absolute;left:339px;top:498px;width:8px;height:15px;background:#fff;"></div>
<div class="t" style="left:341px;top:510.5px;font-size:5.6px;color:#4a5e80;transform:rotate(-90deg);transform-origin:0 0;">108</div>
<svg style="position:absolute;left:410.3px;top:368.3px;" width="34" height="34" viewBox="0 0 34 34"><circle cx="17" cy="17" r="14.2" fill="none" stroke="#f6ecfb" stroke-width="2.2"/><circle cx="17" cy="17" r="15.1" fill="none" stroke="#9d6cc4" stroke-width="1.1"/><circle cx="17" cy="17" r="13.4" fill="none" stroke="#ecdcf6" stroke-width="0.7"/></svg>
<svg style="position:absolute;left:426.3px;top:384.3px;" width="9" height="12" viewBox="0 0 9 12"><path d="M1 1v8.6l2.2-2 1.7 3.4 1.3-.6-1.7-3.3 3-.2z" fill="#111" stroke="#fff" stroke-width=".5"/></svg>
<div class="t" style="left:384.8px;top:510.89px;font-size:10.4px;color:#7d48d6;font-weight:bold;transform:scaleX(0.899);transform-origin:0 0;">RSLOAD.NET</div>
<div style="position:absolute;left:846px;top:87.5px;width:165px;height:265px;background:#353535;border-radius:5px;box-shadow:0 0 0 1px #1a1a1a;overflow:hidden;"></div>
<div style="position:absolute;left:846px;top:87.5px;width:165px;height:17px;background:#232323;border-radius:5px 5px 0 0;"></div>
<div style="position:absolute;left:849.5px;top:92.5px;width:7px;height:7px;background:#4a4a4a;border-radius:50%;"></div>
<div style="position:absolute;left:851.3px;top:94.3px;width:3.4px;height:3.4px;background:#2e2e2e;border-radius:50%;"></div>
<div style="position:absolute;left:859.5px;top:91px;width:1.5px;height:10.5px;background:#4a4a4a;border-radius:1px;"></div>
<div style="position:absolute;left:864.8px;top:90.6px;width:37px;height:12.3px;background:#3a3a3a;border-radius:3px;"></div>
<div class="t" style="left:869px;top:93.23px;font-size:7.2px;color:#e8e8e8;font-weight:normal;transform:scaleX(0.929);transform-origin:0 0;">Swatches</div>
<div style="position:absolute;left:996px;top:92px;width:10px;height:10px;border:1px solid #bbb;border-radius:2.5px;box-sizing:border-box;"></div>
<svg style="position:absolute;left:998.5px;top:95px;" width="5" height="4" viewBox="0 0 5 4"><path d="M0.3 0.3l2.2 2.6 2.2-2.6" fill="none" stroke="#eee" stroke-width="1.1"/></svg>
<svg style="position:absolute;left:850px;top:107px;" width="30" height="30" viewBox="0 0 30 30"><circle cx="11" cy="10.5" r="6.3" fill="none" stroke="#000" stroke-width="3.1"/><circle cx="11" cy="10.5" r="4" fill="none" stroke="#474747" stroke-width="1.2"/><circle cx="17" cy="17.6" r="8" fill="#9349ed"/><circle cx="4.7" cy="24.6" r="3.6" fill="#ececec"/><path d="M2.5 26.8l4.4-4.4" stroke="#666" stroke-width="1.3"/><path d="M21.8 3q3.5.6 4.5 4.5" fill="none" stroke="#9ab" stroke-width=".9"/><path d="M20.8 1.7l1.6 1.3-1.7 1.1M27.6 6.4l-1.3 1.5-1.2-1.6" fill="none" stroke="#9ab" stroke-width=".8"/></svg>
<svg style="position:absolute;left:880px;top:108px;" width="14" height="14" viewBox="0 0 14 14"><path d="M1.5 12.5l1-2.5 5.5-5.5 1.5 1.5-5.5 5.5z" fill="none" stroke="#eee" stroke-width="1.1" stroke-linejoin="round"/><path d="M6.8 3.2l4 4" stroke="#eee" stroke-width="1.6"/><path d="M8.8 2.6q1.8-2.4 3.4-.8t-.8 3.4l-1 .8-2.4-2.4z" fill="#eee"/></svg>
<div style="position:absolute;left:894.2px;top:111.1px;width:9px;height:9px;background:#262626;border-radius:50%;box-shadow:0 0 0 .8px #3a3a3a;"></div>
<div class="t" style="left:938.2px;top:117.53px;font-size:7.2px;color:#dcdcdc;font-weight:normal;transform:scaleX(0.947);transform-origin:0 0;">Opacity:</div>
<div style="position:absolute;left:969px;top:115px;width:36.6px;height:12.7px;background:#262626;border-radius:3px;"></div>
<div style="position:absolute;left:997.5px;top:115px;width:1px;height:12.7px;background:#353535;"></div>
<div class="t" style="left:971.5px;top:117.83px;font-size:7.2px;color:#eee;font-weight:normal;transform:scaleX(0.882);transform-origin:0 0;">100 %</div>
<svg style="position:absolute;left:999.5px;top:120px;" width="5" height="3" viewBox="0 0 5 3"><path d="M0 0h5l-2.5 3z" fill="#ddd"/></svg>
<div class="t" style="left:850.6px;top:146.23px;font-size:7.2px;color:#dcdcdc;font-weight:normal;transform:scaleX(0.907);transform-origin:0 0;">Recent:</div>
<div style="position:absolute;left:877px;top:146px;width:80px;height:8px;background:#2d2d2d;"></div>
<div style="position:absolute;left:877px;top:146px;width:8px;height:8px;background:#9349ed;"></div>
<div style="position:absolute;left:885px;top:146px;width:8px;height:8px;background:#e8e8e8;"></div>
<div style="position:absolute;left:851.2px;top:158px;width:86.6px;height:12.5px;background:#4a4a4a;border-radius:3px;"></div>
<div style="position:absolute;left:853.5px;top:159.8px;width:9px;height:9px;border:.8px solid #777;border-radius:1.5px;box-sizing:border-box;"></div>
<svg style="position:absolute;left:855.5px;top:161.8px;" width="5" height="5" viewBox="0 0 5 5"><circle cx="2.5" cy="2.5" r="1.8" fill="none" stroke="#999" stroke-width=".8"/></svg>
<div class="t" style="left:869px;top:160.83px;font-size:7.2px;color:#e8e8e8;font-weight:normal;transform:scaleX(0.927);transform-origin:0 0;">Colours</div>
<svg style="position:absolute;left:930px;top:160.5px;" width="5" height="8" viewBox="0 0 5 8"><path d="M0.5 2.8l2-2 2 2M0.5 5.2l2 2 2-2" fill="none" stroke="#ccc" stroke-width=".9"/></svg>
<svg style="position:absolute;left:943px;top:160px;" width="10" height="10" viewBox="0 0 10 10"><rect x="0" y="0" width="4" height="4" fill="#ddd"/><rect x="0" y="5.5" width="4" height="4" fill="#ddd"/><rect x="5.5" y="5.5" width="4" height="4" fill="#ddd"/><path d="M7.5 0v4M5.5 2h4" stroke="#ddd" stroke-width="1"/></svg>
<div style="position:absolute;left:972.8px;top:161.8px;width:8px;height:8px;background:#f2f2f2;"></div>
<svg style="position:absolute;left:972.8px;top:161.8px;" width="8" height="8" viewBox="0 0 8 8"><path d="M0.5 7.5l7-7" stroke="#333" stroke-width=".9"/></svg>
<div style="position:absolute;left:980.8px;top:161.8px;width:8px;height:8px;background:#050505;"></div>
<div style="position:absolute;left:988.8px;top:161.8px;width:8px;height:8px;background:#7f7f7f;"></div>
<div style="position:absolute;left:996.8px;top:161.8px;width:8.5px;height:8px;background:#f5f5f5;"></div>
<svg style="position:absolute;left:0px;top:0px;" width="1" height="1" viewBox="0 0 1 1"><path d="M851.4 174.4h139.44v117.86h-21.36v10.66h-118.07999999999998z" fill="#262626"/><rect x="853.60" y="176.60" width="6.6" height="6.6" fill="#9349ed"/><rect x="862.68" y="175.00" width="9.88" height="9.86" fill="#f61212"/><rect x="873.36" y="175.00" width="9.88" height="9.86" fill="#f66312"/><rect x="884.04" y="175.00" width="9.88" height="9.86" fill="#f6b312"/><rect x="894.72" y="175.00" width="9.88" height="9.86" fill="#e9f612"/><rect x="905.40" y="175.00" width="9.88" height="9.86" fill="#98f612"/><rect x="916.08" y="175.00" width="9.88" height="9.86" fill="#48f612"/><rect x="926.76" y="175.00" width="9.88" height="9.86" fill="#12f62d"/><rect x="937.44" y="175.00" width="9.88" height="9.86" fill="#12f67d"/><rect x="948.12" y="175.00" width="9.88" height="9.86" fill="#12f6ce"/><rect x="958.80" y="175.00" width="9.88" height="9.86" fill="#12cef6"/><rect x="969.48" y="175.00" width="9.88" height="9.86" fill="#127df6"/><rect x="980.16" y="175.00" width="9.88" height="9.86" fill="#122df6"/><rect x="852.00" y="185.66" width="9.88" height="9.86" fill="#4812f6"/><rect x="862.68" y="185.66" width="9.88" height="9.86" fill="#9812f6"/><rect x="873.36" y="185.66" width="9.88" height="9.86" fill="#e912f6"/><rect x="884.04" y="185.66" width="9.88" height="9.86" fill="#f612b3"/><rect x="894.72" y="185.66" width="9.88" height="9.86" fill="#f61263"/><rect x="905.40" y="185.66" width="9.88" height="9.86" fill="#ec1f1f"/><rect x="916.08" y="185.66" width="9.88" height="9.86" fill="#ec671f"/><rect x="926.76" y="185.66" width="9.88" height="9.86" fill="#ecaf1f"/><rect x="937.44" y="185.66" width="9.88" height="9.86" fill="#e0ec1f"/><rect x="948.12" y="185.66" width="9.88" height="9.86" fill="#97ec1f"/><rect x="958.80" y="185.66" width="9.88" height="9.86" fill="#4fec1f"/><rect x="969.48" y="185.66" width="9.88" height="9.86" fill="#1fec37"/><rect x="980.16" y="185.66" width="9.88" height="9.86" fill="#1fec7f"/><rect x="852.00" y="196.32" width="9.88" height="9.86" fill="#1fecc7"/><rect x="862.68" y="196.32" width="9.88" height="9.86" fill="#1fc7ec"/><rect x="873.36" y="196.32" width="9.88" height="9.86" fill="#1f7fec"/><rect x="884.04" y="196.32" width="9.88" height="9.86" fill="#1f37ec"/><rect x="894.72" y="196.32" width="9.88" height="9.86" fill="#4f1fec"/><rect x="905.40" y="196.32" width="9.88" height="9.86" fill="#971fec"/><rect x="916.08" y="196.32" width="9.88" height="9.86" fill="#e01fec"/><rect x="926.76" y="196.32" width="9.88" height="9.86" fill="#ec1faf"/><rect x="937.44" y="196.32" width="9.88" height="9.86" fill="#ec1f67"/><rect x="948.12" y="196.32" width="9.88" height="9.86" fill="#e22b2b"/><rect x="958.80" y="196.32" width="9.88" height="9.86" fill="#e26b2b"/><rect x="969.48" y="196.32" width="9.88" height="9.86" fill="#e2ac2b"/><rect x="980.16" y="196.32" width="9.88" height="9.86" fill="#d7e22b"/><rect x="852.00" y="206.98" width="9.88" height="9.86" fill="#96e22b"/><rect x="862.68" y="206.98" width="9.88" height="9.86" fill="#56e22b"/><rect x="873.36" y="206.98" width="9.88" height="9.86" fill="#2be240"/><rect x="884.04" y="206.98" width="9.88" height="9.86" fill="#2be281"/><rect x="894.72" y="206.98" width="9.88" height="9.86" fill="#2be2c1"/><rect x="905.40" y="206.98" width="9.88" height="9.86" fill="#2bc1e2"/><rect x="916.08" y="206.98" width="9.88" height="9.86" fill="#2b81e2"/><rect x="926.76" y="206.98" width="9.88" height="9.86" fill="#2b40e2"/><rect x="937.44" y="206.98" width="9.88" height="9.86" fill="#562be2"/><rect x="948.12" y="206.98" width="9.88" height="9.86" fill="#962be2"/><rect x="958.80" y="206.98" width="9.88" height="9.86" fill="#d72be2"/><rect x="969.48" y="206.98" width="9.88" height="9.86" fill="#e22bac"/><rect x="980.16" y="206.98" width="9.88" height="9.86" fill="#e22b6b"/><rect x="852.00" y="217.64" width="9.88" height="9.86" fill="#d83737"/><rect x="862.68" y="217.64" width="9.88" height="9.86" fill="#d86f37"/><rect x="873.36" y="217.64" width="9.88" height="9.86" fill="#d8a837"/><rect x="884.04" y="217.64" width="9.88" height="9.86" fill="#ced837"/><rect x="894.72" y="217.64" width="9.88" height="9.86" fill="#95d837"/><rect x="905.40" y="217.64" width="9.88" height="9.86" fill="#5dd837"/><rect x="916.08" y="217.64" width="9.88" height="9.86" fill="#37d84a"/><rect x="926.76" y="217.64" width="9.88" height="9.86" fill="#37d882"/><rect x="937.44" y="217.64" width="9.88" height="9.86" fill="#37d8bb"/><rect x="948.12" y="217.64" width="9.88" height="9.86" fill="#37bbd8"/><rect x="958.80" y="217.64" width="9.88" height="9.86" fill="#3782d8"/><rect x="969.48" y="217.64" width="9.88" height="9.86" fill="#374ad8"/><rect x="980.16" y="217.64" width="9.88" height="9.86" fill="#5d37d8"/><rect x="852.00" y="228.30" width="9.88" height="9.86" fill="#9537d8"/><rect x="862.68" y="228.30" width="9.88" height="9.86" fill="#ce37d8"/><rect x="873.36" y="228.30" width="9.88" height="9.86" fill="#d837a8"/><rect x="884.04" y="228.30" width="9.88" height="9.86" fill="#d8376f"/><rect x="894.72" y="228.30" width="9.88" height="9.86" fill="#ce4242"/><rect x="905.40" y="228.30" width="9.88" height="9.86" fill="#ce7442"/><rect x="916.08" y="228.30" width="9.88" height="9.86" fill="#cea542"/><rect x="926.76" y="228.30" width="9.88" height="9.86" fill="#c6ce42"/><rect x="937.44" y="228.30" width="9.88" height="9.86" fill="#94ce42"/><rect x="948.12" y="228.30" width="9.88" height="9.86" fill="#63ce42"/><rect x="958.80" y="228.30" width="9.88" height="9.86" fill="#42ce53"/><rect x="969.48" y="228.30" width="9.88" height="9.86" fill="#42ce84"/><rect x="980.16" y="228.30" width="9.88" height="9.86" fill="#42ceb5"/><rect x="852.00" y="238.96" width="9.88" height="9.86" fill="#42b5ce"/><rect x="862.68" y="238.96" width="9.88" height="9.86" fill="#4284ce"/><rect x="873.36" y="238.96" width="9.88" height="9.86" fill="#4253ce"/><rect x="884.04" y="238.96" width="9.88" height="9.86" fill="#6342ce"/><rect x="894.72" y="238.96" width="9.88" height="9.86" fill="#9442ce"/><rect x="905.40" y="238.96" width="9.88" height="9.86" fill="#c642ce"/><rect x="916.08" y="238.96" width="9.88" height="9.86" fill="#ce42a5"/><rect x="926.76" y="238.96" width="9.88" height="9.86" fill="#ce4274"/><rect x="937.44" y="238.96" width="9.88" height="9.86" fill="#c44e4e"/><rect x="948.12" y="238.96" width="9.88" height="9.86" fill="#c4784e"/><rect x="958.80" y="238.96" width="9.88" height="9.86" fill="#c4a24e"/><rect x="969.48" y="238.96" width="9.88" height="9.86" fill="#bdc44e"/><rect x="980.16" y="238.96" width="9.88" height="9.86" fill="#94c44e"/><rect x="852.00" y="249.62" width="9.88" height="9.86" fill="#6ac44e"/><rect x="862.68" y="249.62" width="9.88" height="9.86" fill="#4ec45c"/><rect x="873.36" y="249.62" width="9.88" height="9.86" fill="#4ec486"/><rect x="884.04" y="249.62" width="9.88" height="9.86" fill="#4ec4b0"/><rect x="894.72" y="249.62" width="9.88" height="9.86" fill="#4eb0c4"/><rect x="905.40" y="249.62" width="9.88" height="9.86" fill="#4e86c4"/><rect x="916.08" y="249.62" width="9.88" height="9.86" fill="#4e5cc4"/><rect x="926.76" y="249.62" width="9.88" height="9.86" fill="#6a4ec4"/><rect x="937.44" y="249.62" width="9.88" height="9.86" fill="#944ec4"/><rect x="948.12" y="249.62" width="9.88" height="9.86" fill="#bd4ec4"/><rect x="958.80" y="249.62" width="9.88" height="9.86" fill="#c44ea2"/><rect x="969.48" y="249.62" width="9.88" height="9.86" fill="#c44e78"/><rect x="980.16" y="249.62" width="9.88" height="9.86" fill="#b85d5d"/><rect x="852.00" y="260.28" width="9.88" height="9.86" fill="#b87d5d"/><rect x="862.68" y="260.28" width="9.88" height="9.86" fill="#b89d5d"/><rect x="873.36" y="260.28" width="9.88" height="9.86" fill="#b2b85d"/><rect x="884.04" y="260.28" width="9.88" height="9.86" fill="#92b85d"/><rect x="894.72" y="260.28" width="9.88" height="9.86" fill="#72b85d"/><rect x="905.40" y="260.28" width="9.88" height="9.86" fill="#5db868"/><rect x="916.08" y="260.28" width="9.88" height="9.86" fill="#5db888"/><rect x="926.76" y="260.28" width="9.88" height="9.86" fill="#5db8a8"/><rect x="937.44" y="260.28" width="9.88" height="9.86" fill="#5da8b8"/><rect x="948.12" y="260.28" width="9.88" height="9.86" fill="#5d88b8"/><rect x="958.80" y="260.28" width="9.88" height="9.86" fill="#5d68b8"/><rect x="969.48" y="260.28" width="9.88" height="9.86" fill="#725db8"/><rect x="980.16" y="260.28" width="9.88" height="9.86" fill="#925db8"/><rect x="852.00" y="270.94" width="9.88" height="9.86" fill="#b25db8"/><rect x="862.68" y="270.94" width="9.88" height="9.86" fill="#b85d9d"/><rect x="873.36" y="270.94" width="9.88" height="9.86" fill="#b85d7d"/><rect x="884.04" y="270.94" width="9.88" height="9.86" fill="#ab6c6c"/><rect x="894.72" y="270.94" width="9.88" height="9.86" fill="#ab826c"/><rect x="905.40" y="270.94" width="9.88" height="9.86" fill="#ab986c"/><rect x="916.08" y="270.94" width="9.88" height="9.86" fill="#a7ab6c"/><rect x="926.76" y="270.94" width="9.88" height="9.86" fill="#91ab6c"/><rect x="937.44" y="270.94" width="9.88" height="9.86" fill="#7aab6c"/><rect x="948.12" y="270.94" width="9.88" height="9.86" fill="#6cab73"/><rect x="958.80" y="270.94" width="9.88" height="9.86" fill="#6cab89"/><rect x="969.48" y="270.94" width="9.88" height="9.86" fill="#6caba0"/><rect x="980.16" y="270.94" width="9.88" height="9.86" fill="#6ca0ab"/><rect x="852.00" y="281.60" width="9.88" height="9.86" fill="#6c89ab"/><rect x="862.68" y="281.60" width="9.88" height="9.86" fill="#6c73ab"/><rect x="873.36" y="281.60" width="9.88" height="9.86" fill="#7a6cab"/><rect x="884.04" y="281.60" width="9.88" height="9.86" fill="#916cab"/><rect x="894.72" y="281.60" width="9.88" height="9.86" fill="#a76cab"/><rect x="905.40" y="281.60" width="9.88" height="9.86" fill="#ab6c98"/><rect x="916.08" y="281.60" width="9.88" height="9.86" fill="#ab6c82"/><rect x="926.76" y="281.60" width="9.88" height="9.86" fill="#9f7a7a"/><rect x="937.44" y="281.60" width="9.88" height="9.86" fill="#9f877a"/><rect x="948.12" y="281.60" width="9.88" height="9.86" fill="#9f947a"/><rect x="958.80" y="281.60" width="9.88" height="9.86" fill="#9c9f7a"/><rect x="969.48" y="281.60" width="9.88" height="9.86" fill="#8f9f7a"/><rect x="980.16" y="281.60" width="9.88" height="9.86" fill="#839f7a"/><rect x="852.00" y="292.26" width="9.88" height="9.86" fill="#7a9f7e"/><rect x="862.68" y="292.26" width="9.88" height="9.86" fill="#7a9f8b"/><rect x="873.36" y="292.26" width="9.88" height="9.86" fill="#7a9f98"/><rect x="884.04" y="292.26" width="9.88" height="9.86" fill="#7a989f"/><rect x="894.72" y="292.26" width="9.88" height="9.86" fill="#7a8b9f"/><rect x="905.40" y="292.26" width="9.88" height="9.86" fill="#7a7e9f"/><rect x="916.08" y="292.26" width="9.88" height="9.86" fill="#837a9f"/><rect x="926.76" y="292.26" width="9.88" height="9.86" fill="#8f7a9f"/><rect x="937.44" y="292.26" width="9.88" height="9.86" fill="#9c7a9f"/><rect x="948.12" y="292.26" width="9.88" height="9.86" fill="#9f7a94"/><rect x="958.80" y="292.26" width="9.88" height="9.86" fill="#9f7a87"/></svg>
<div style="position:absolute;left:851px;top:336.2px;width:154px;height:10.3px;background:#232323;border-radius:3px;"></div>
<svg style="position:absolute;left:855px;top:338px;" width="8" height="8" viewBox="0 0 8 8"><circle cx="3.2" cy="3.2" r="2.4" fill="none" stroke="#ddd" stroke-width="1.1"/><path d="M5 5l2.5 2.5" stroke="#ddd" stroke-width="1.3"/></svg>
<div class="t" style="left:869px;top:338.03px;font-size:7.2px;color:#6a6a6a;font-weight:normal;transform:scaleX(1.008);transform-origin:0 0;">Search</div>
<div style="position:absolute;left:1024px;top:79px;width:1px;height:583px;background:#151515;"></div>
<div style="position:absolute;left:1025px;top:79px;width:175px;height:583px;background:#353535;"></div>
<div style="position:absolute;left:1025px;top:79px;width:175px;height:17.5px;background:#222222;"></div>
<div style="position:absolute;left:1030px;top:83px;width:1.8px;height:9.5px;background:#4f4f4f;border-radius:1px;"></div>
<div style="position:absolute;left:1184px;top:83.3px;width:10.3px;height:9.5px;border:1px solid #bbb;border-radius:2.5px;box-sizing:border-box;"></div>
<svg style="position:absolute;left:1186.8px;top:86.5px;" width="5" height="4" viewBox="0 0 5 4"><path d="M0.3 0.3l2.2 2.6 2.2-2.6" fill="none" stroke="#eee" stroke-width="1.1"/></svg>
<div style="position:absolute;left:1037.2px;top:82.2px;width:26.7px;height:11.1px;background:#3c3c3c;border-radius:3px;"></div>
<div class="t" style="left:1040px;top:84.28px;font-size:7.2px;color:#f0f0f0;font-weight:normal;transform:scaleX(0.990);transform-origin:0 0;">Colour</div>
<div class="t" style="left:1068px;top:84.28px;font-size:7.2px;color:#bdbdbd;font-weight:normal;transform:scaleX(0.913);transform-origin:0 0;">Stroke</div>
<div class="t" style="left:1096px;top:84.28px;font-size:7.2px;color:#bdbdbd;font-weight:normal;transform:scaleX(0.901);transform-origin:0 0;">Appearance</div>
<svg style="position:absolute;left:1027px;top:97px;" width="34" height="34" viewBox="0 0 34 34"><circle cx="12.1" cy="13" r="6.3" fill="none" stroke="#000" stroke-width="3.1"/><circle cx="12.1" cy="13" r="4" fill="none" stroke="#474747" stroke-width="1.2"/><circle cx="19.2" cy="19.8" r="7.8" fill="#9349ed"/><circle cx="6.7" cy="26" r="3.6" fill="#ececec"/><path d="M4.5 28.2l4.4-4.4" stroke="#666" stroke-width="1.3"/><path d="M23.5 4.8q3.5.6 4.5 4.5" fill="none" stroke="#9ab" stroke-width=".9"/><path d="M22.5 3.5l1.6 1.3-1.7 1.1M29.3 8.2l-1.3 1.5-1.2-1.6" fill="none" stroke="#9ab" stroke-width=".8"/></svg>
<svg style="position:absolute;left:1060px;top:101px;" width="14" height="14" viewBox="0 0 14 14"><path d="M1.5 12.5l1-2.5 5.5-5.5 1.5 1.5-5.5 5.5z" fill="none" stroke="#eee" stroke-width="1.1" stroke-linejoin="round"/><path d="M6.8 3.2l4 4" stroke="#eee" stroke-width="1.6"/><path d="M8.8 2.6q1.8-2.4 3.4-.8t-.8 3.4l-1 .8-2.4-2.4z" fill="#eee"/></svg>
<div style="position:absolute;left:1073px;top:102.5px;width:9px;height:9px;background:#262626;border-radius:50%;box-shadow:0 0 0 .8px #3a3a3a;"></div>
<div style="position:absolute;left:1066.5px;top:113px;width:92px;height:92px;border-radius:50%;background:conic-gradient(from 0deg, hsl(270,100%,50%), hsl(300,100%,50%), hsl(330,100%,50%), hsl(360,100%,50%), hsl(30,100%,50%), hsl(60,100%,50%), hsl(90,100%,50%), hsl(120,100%,50%), hsl(150,100%,50%), hsl(180,100%,50%), hsl(210,100%,50%), hsl(240,100%,50%), hsl(270,100%,50%));"></div>
<div style="position:absolute;left:1076.0px;top:122.5px;width:73.0px;height:73.0px;background:#353535;border-radius:50%;"></div>
<svg style="position:absolute;left:0px;top:0px;" width="1" height="1" viewBox="0 0 1 1"><defs><linearGradient id="tg1" gradientUnits="userSpaceOnUse" x1="1110.6002047883812" y1="122.74974788840898" x2="1113.4498976058094" y2="178.77039697104547"><stop offset="0" stop-color="#7a1fff"/><stop offset="1" stop-color="#7a1fff" stop-opacity="0"/></linearGradient>
<linearGradient id="tg2" gradientUnits="userSpaceOnUse" x1="1082.056258383581" y1="178.77039697104547" x2="1144.8435368280377" y2="175.47985514054554"><stop offset="0" stop-color="#000"/><stop offset="1" stop-color="#fff"/></linearGradient></defs>
<path d="M1110.6002047883812 122.74974788840898L1082.056258383581 178.77039697104547L1144.8435368280377 175.47985514054554z" fill="url(#tg2)"/><path d="M1110.6002047883812 122.74974788840898L1082.056258383581 178.77039697104547L1144.8435368280377 175.47985514054554z" fill="url(#tg1)"/></svg>
<svg style="position:absolute;left:1104.3px;top:111.7px;" width="12" height="12" viewBox="0 0 12 12"><circle cx="5.5" cy="5.5" r="3.9" fill="#7a2ff0" stroke="#fff" stroke-width="1.2"/></svg>
<svg style="position:absolute;left:1113px;top:135px;" width="12" height="12" viewBox="0 0 12 12"><circle cx="5.6" cy="5.9" r="3.4" fill="none" stroke="#fff" stroke-width="1"/></svg>
<div style="position:absolute;left:1173px;top:113px;width:10.5px;height:10.5px;background:#000;"></div>
<div style="position:absolute;left:1183.5px;top:113px;width:10.5px;height:10.5px;background:#fff;"></div>
<div style="position:absolute;left:1173px;top:123.5px;width:10.5px;height:10.5px;background:#9349ed;"></div>
<div style="position:absolute;left:1183.5px;top:123.5px;width:10.5px;height:10.5px;background:#e8e8e8;"></div>
<div class="t" style="left:1030.7px;top:178.43px;font-size:7.4px;color:#e6e6e6;font-weight:normal;transform:scaleX(0.872);transform-origin:0 0;">H: 267</div>
<div class="t" style="left:1030.7px;top:186.63px;font-size:7.4px;color:#e6e6e6;font-weight:normal;transform:scaleX(0.891);transform-origin:0 0;">S: 82</div>
<div class="t" style="left:1030.7px;top:194.63px;font-size:7.4px;color:#e6e6e6;font-weight:normal;transform:scaleX(0.863);transform-origin:0 0;">L: 61</div>
<div class="t" style="left:1157px;top:200.22px;font-size:6.8px;color:#ddd;font-weight:normal;transform:scaleX(1.058);transform-origin:0 0;">#:</div>
<div style="position:absolute;left:1164.6px;top:198.8px;width:31.4px;height:9.5px;background:#262626;border-radius:2px;"></div>
<div class="t" style="left:1166.5px;top:200.23px;font-size:7px;color:#f0f0f0;font-weight:normal;transform:scaleX(0.949);transform-origin:0 0;">9349ED</div>
<div class="t" style="left:1031px;top:206.33px;font-size:7.2px;color:#dcdcdc;font-weight:normal;transform:scaleX(0.942);transform-origin:0 0;">Opacity</div>
<div style="position:absolute;left:1031.2px;top:216.4px;width:8.4px;height:8.4px;background:#9349ed;border-radius:50%;"></div>
<div style="position:absolute;left:1043px;top:217.8px;width:102px;height:5.6px;border-radius:2.8px;background:linear-gradient(90deg,rgba(255,255,255,.95) 0%,rgba(255,255,255,.55) 25%,rgba(255,255,255,.15) 70%,rgba(255,255,255,0) 100%),repeating-conic-gradient(#c8c8c8 0 25%,#6a6a6a 0 50%) 0 0/5.6px 5.6px;"></div>
<svg style="position:absolute;left:1143.5px;top:215px;" width="11" height="11" viewBox="0 0 11 11"><circle cx="5.2" cy="5.4" r="3.1" fill="#333" stroke="#eee" stroke-width="1"/></svg>
<div style="position:absolute;left:1157px;top:215px;width:39px;height:11px;background:#262626;border-radius:3px;"></div>
<div style="position:absolute;left:1184.5px;top:215px;width:1px;height:11px;background:#353535;"></div>
<div class="t" style="left:1160px;top:217.13px;font-size:7.2px;color:#eee;font-weight:normal;transform:scaleX(0.882);transform-origin:0 0;">100 %</div>
<svg style="position:absolute;left:1187.8px;top:219.3px;" width="5" height="4" viewBox="0 0 5 4"><path d="M0.3 0.3l2.2 2.6 2.2-2.6" fill="none" stroke="#ddd" stroke-width="1"/></svg>
<div style="position:absolute;left:1025px;top:228.6px;width:175px;height:1.5px;background:#1d1d1d;"></div>
<div style="position:absolute;left:1025px;top:230.2px;width:175px;height:17.0px;background:#222222;"></div>
<div style="position:absolute;left:1030px;top:234.2px;width:1.8px;height:9.0px;background:#4f4f4f;border-radius:1px;"></div>
<div style="position:absolute;left:1184px;top:234.5px;width:10.3px;height:9.5px;border:1px solid #bbb;border-radius:2.5px;box-sizing:border-box;"></div>
<svg style="position:absolute;left:1186.8px;top:237.7px;" width="5" height="4" viewBox="0 0 5 4"><path d="M0.3 0.3l2.2 2.6 2.2-2.6" fill="none" stroke="#eee" stroke-width="1.1"/></svg>
<div style="position:absolute;left:1037.2px;top:233.39999999999998px;width:37px;height:10.6px;background:#3c3c3c;border-radius:3px;"></div>
<div class="t" style="left:1041px;top:235.23px;font-size:7.2px;color:#f0f0f0;font-weight:normal;transform:scaleX(0.922);transform-origin:0 0;">Transform</div>
<div class="t" style="left:1078.7px;top:235.23px;font-size:7.2px;color:#bdbdbd;font-weight:normal;transform:scaleX(0.925);transform-origin:0 0;">Navigator</div>
<div class="t" style="left:1115.5px;top:235.23px;font-size:7.2px;color:#bdbdbd;font-weight:normal;transform:scaleX(0.960);transform-origin:0 0;">History</div>
<div style="position:absolute;left:1037px;top:265.5px;width:21px;height:21px;background:#6a6a6a;"></div>
<div style="position:absolute;left:1035.8px;top:263.1px;width:3.8px;height:3.8px;background:#9a9a9a;"></div>
<div style="position:absolute;left:1035.8px;top:272.90000000000003px;width:3.8px;height:3.8px;background:#9a9a9a;"></div>
<div style="position:absolute;left:1035.8px;top:282.6px;width:3.8px;height:3.8px;background:#9a9a9a;"></div>
<div style="position:absolute;left:1045.3999999999999px;top:263.1px;width:3.8px;height:3.8px;background:#9a9a9a;"></div>
<div style="position:absolute;left:1045.3999999999999px;top:272.90000000000003px;width:3.8px;height:3.8px;background:#9a9a9a;"></div>
<div style="position:absolute;left:1045.3999999999999px;top:282.6px;width:3.8px;height:3.8px;background:#9a9a9a;"></div>
<div style="position:absolute;left:1055.1px;top:263.1px;width:3.8px;height:3.8px;background:#9a9a9a;"></div>
<div style="position:absolute;left:1055.1px;top:272.90000000000003px;width:3.8px;height:3.8px;background:#9a9a9a;"></div>
<div style="position:absolute;left:1055.1px;top:282.6px;width:3.8px;height:3.8px;background:#9a9a9a;"></div>
<div style="position:absolute;left:1035px;top:263.2px;width:6.2px;height:6.2px;background:#f4f4f4;"></div>
<div class="t" style="left:1074.8px;top:259.33px;font-size:7px;color:#c8c8c8;font-weight:normal;">X:</div>
<div style="position:absolute;left:1084px;top:257.09999999999997px;width:35.6px;height:11.2px;background:#262626;border-radius:2px;"></div>
<div class="t" style="left:1085.6px;top:259.23px;font-size:7.2px;color:#f2f2f2;font-weight:normal;transform:scaleX(0.964);transform-origin:0 0;">86.9 mm</div>
<div class="t" style="left:1074.8px;top:273.23px;font-size:7px;color:#c8c8c8;font-weight:normal;">Y:</div>
<div style="position:absolute;left:1084px;top:271.0px;width:35.6px;height:11.2px;background:#262626;border-radius:2px;"></div>
<div class="t" style="left:1085.6px;top:273.13px;font-size:7.2px;color:#f2f2f2;font-weight:normal;transform:scaleX(0.964);transform-origin:0 0;">57.2 mm</div>
<div class="t" style="left:1074.8px;top:289.23px;font-size:7px;color:#c8c8c8;font-weight:normal;">R:</div>
<div style="position:absolute;left:1084px;top:287.0px;width:35.6px;height:11.2px;background:#262626;border-radius:2px;"></div>
<div class="t" style="left:1085.6px;top:289.13px;font-size:7.2px;color:#f2f2f2;font-weight:normal;transform:scaleX(1.013);transform-origin:0 0;">0 °</div>
<div style="position:absolute;left:1112.5px;top:287.0px;width:1px;height:11.2px;background:#353535;"></div>
<svg style="position:absolute;left:1114.8px;top:291.6px;" width="4" height="3" viewBox="0 0 4 3"><path d="M0 0h4l-2 2.6z" fill="#e0e0e0"/></svg>
<div class="t" style="left:1127.5px;top:259.33px;font-size:7px;color:#c8c8c8;font-weight:normal;">W:</div>
<div style="position:absolute;left:1138.8px;top:257.09999999999997px;width:35.9px;height:11.2px;background:#262626;border-radius:2px;"></div>
<div class="t" style="left:1140.3999999999999px;top:259.23px;font-size:7.2px;color:#f2f2f2;font-weight:normal;transform:scaleX(0.964);transform-origin:0 0;">22.3 mm</div>
<div class="t" style="left:1128px;top:273.23px;font-size:7px;color:#c8c8c8;font-weight:normal;">H:</div>
<div style="position:absolute;left:1138.8px;top:271.0px;width:35.9px;height:11.2px;background:#262626;border-radius:2px;"></div>
<div class="t" style="left:1140.3999999999999px;top:273.13px;font-size:7.2px;color:#f2f2f2;font-weight:normal;transform:scaleX(0.964);transform-origin:0 0;">43.8 mm</div>
<div class="t" style="left:1128px;top:289.23px;font-size:7px;color:#c8c8c8;font-weight:normal;">S:</div>
<div style="position:absolute;left:1138.8px;top:287.0px;width:35.9px;height:11.2px;background:#262626;border-radius:2px;"></div>
<div class="t" style="left:1140.3999999999999px;top:289.13px;font-size:7.2px;color:#f2f2f2;font-weight:normal;transform:scaleX(1.013);transform-origin:0 0;">0 °</div>
<div style="position:absolute;left:1167.3px;top:287.0px;width:1px;height:11.2px;background:#353535;"></div>
<svg style="position:absolute;left:1169.6px;top:291.6px;" width="4" height="3" viewBox="0 0 4 3"><path d="M0 0h4l-2 2.6z" fill="#e0e0e0"/></svg>
<svg style="position:absolute;left:1179.5px;top:263px;" width="6" height="14" viewBox="0 0 6 14"><path d="M1 5V1.5h4V5M1 9v3.5h4V9" fill="none" stroke="#aaa" stroke-width="1"/></svg>
<svg style="position:absolute;left:1154px;top:303.5px;" width="12" height="10" viewBox="0 0 12 10"><rect x="0.5" y="0.5" width="10" height="8.5" rx="1.5" fill="none" stroke="#bbb" stroke-width=".9" stroke-dasharray="2 1"/><rect x="2" y="4.5" width="5" height="4" fill="#eee"/></svg>
<svg style="position:absolute;left:1170.5px;top:307.2px;" width="5" height="4" viewBox="0 0 5 4"><path d="M0.3 0.3l2.2 2.6 2.2-2.6" fill="none" stroke="#ccc" stroke-width="1"/></svg>
<div class="t" style="left:1037.8px;top:310.30px;font-size:11px;color:#8848e8;font-weight:bold;transform:scaleX(0.940);transform-origin:0 0;">rsload.net</div>
<div style="position:absolute;left:1025px;top:322.8px;width:175px;height:1.5px;background:#1d1d1d;"></div>
<div style="position:absolute;left:1025px;top:324.3px;width:175px;height:16.69999999999999px;background:#222222;"></div>
<div style="position:absolute;left:1030px;top:328.3px;width:1.8px;height:8.699999999999989px;background:#4f4f4f;border-radius:1px;"></div>
<div style="position:absolute;left:1184px;top:328.6px;width:10.3px;height:9.5px;border:1px solid #bbb;border-radius:2.5px;box-sizing:border-box;"></div>
<svg style="position:absolute;left:1186.8px;top:331.8px;" width="5" height="4" viewBox="0 0 5 4"><path d="M0.3 0.3l2.2 2.6 2.2-2.6" fill="none" stroke="#eee" stroke-width="1.1"/></svg>
<div style="position:absolute;left:1037.2px;top:327.5px;width:27px;height:10.299999999999988px;background:#3c3c3c;border-radius:3px;"></div>
<div class="t" style="left:1041px;top:329.18px;font-size:7.2px;color:#f0f0f0;font-weight:normal;transform:scaleX(0.926);transform-origin:0 0;">Layers</div>
<div class="t" style="left:1068px;top:329.18px;font-size:7.2px;color:#bdbdbd;font-weight:normal;transform:scaleX(0.925);transform-origin:0 0;">Path Brushes</div>
<div class="t" style="left:1115.5px;top:329.18px;font-size:7.2px;color:#bdbdbd;font-weight:normal;transform:scaleX(0.912);transform-origin:0 0;">Quick FX</div>
<div class="t" style="left:1150.5px;top:329.18px;font-size:7.2px;color:#bdbdbd;font-weight:normal;transform:scaleX(0.969);transform-origin:0 0;">Styles</div>
<div class="t" style="left:1028.5px;top:349.03px;font-size:7.2px;color:#e0e0e0;font-weight:normal;transform:scaleX(0.947);transform-origin:0 0;">Opacity:</div>
<div style="position:absolute;left:1056.5px;top:346px;width:33.5px;height:13px;background:#232323;border-radius:3px;"></div>
<div class="t" style="left:1058.5px;top:349.13px;font-size:7.4px;color:#eee;font-weight:normal;transform:scaleX(0.882);transform-origin:0 0;">100 %</div>
<svg style="position:absolute;left:1085px;top:351.5px;" width="4" height="3" viewBox="0 0 4 3"><path d="M0 0h4l-2 3z" fill="#ddd"/></svg>
<div style="position:absolute;left:1092.9px;top:346px;width:77.4px;height:13px;background:#555;border-radius:3px;"></div>
<div class="t" style="left:1095.5px;top:349.13px;font-size:7.4px;color:#f0f0f0;font-weight:normal;transform:scaleX(0.923);transform-origin:0 0;">Normal</div>
<svg style="position:absolute;left:1162.5px;top:348px;" width="5" height="9" viewBox="0 0 5 9"><path d="M0.5 3l2-2 2 2M0.5 6l2 2 2-2" fill="none" stroke="#ccc" stroke-width=".9"/></svg>
<svg style="position:absolute;left:1173px;top:347.5px;" width="10" height="10" viewBox="0 0 10 10"><circle cx="5" cy="5" r="2.6" fill="none" stroke="#eee" stroke-width="2.2"/><rect x="4.2" y="0" width="1.6" height="2.2" fill="#eee" transform="rotate(0 5 5)"/><rect x="4.2" y="0" width="1.6" height="2.2" fill="#eee" transform="rotate(45 5 5)"/><rect x="4.2" y="0" width="1.6" height="2.2" fill="#eee" transform="rotate(90 5 5)"/><rect x="4.2" y="0" width="1.6" height="2.2" fill="#eee" transform="rotate(135 5 5)"/><rect x="4.2" y="0" width="1.6" height="2.2" fill="#eee" transform="rotate(180 5 5)"/><rect x="4.2" y="0" width="1.6" height="2.2" fill="#eee" transform="rotate(225 5 5)"/><rect x="4.2" y="0" width="1.6" height="2.2" fill="#eee" transform="rotate(270 5 5)"/><rect x="4.2" y="0" width="1.6" height="2.2" fill="#eee" transform="rotate(315 5 5)"/></svg>
<svg style="position:absolute;left:1186px;top:346.5px;" width="8" height="12" viewBox="0 0 8 12"><path d="M1.8 5V3.3a2.2 2.2 0 0 1 4.4 0V5" fill="none" stroke="#aaa" stroke-width="1.1"/><rect x="0.5" y="5" width="7" height="6" rx="1" fill="#aaa"/></svg>
<div style="position:absolute;left:1025px;top:362.6px;width:175px;height:30.7px;background:#0a66d2;"></div>
<div style="position:absolute;left:1025px;top:362.6px;width:10px;height:30.7px;background:#1070d8;"></div>
<div style="position:absolute;left:1036px;top:362.6px;width:29.9px;height:30.7px;background:#b4b4b4;"></div>
<div class="t" style="left:1073px;top:375.68px;font-size:7.3px;color:#5d9be6;font-weight:normal;transform:scaleX(0.882);transform-origin:0 0;">Rectangle</div>
<div style="position:absolute;left:1179.2px;top:362.6px;width:1px;height:30.7px;background:#0a58b8;"></div>
<div style="position:absolute;left:1025px;top:393.3px;width:175px;height:30.7px;background:#383838;"></div>
<div style="position:absolute;left:1036px;top:393.3px;width:29.9px;height:30.7px;background:#b4b4b4;"></div>
<div style="position:absolute;left:1043px;top:395.5px;width:15.2px;height:26.2px;background:#000;"></div>
<div style="position:absolute;left:1046.2px;top:398.8px;width:8.8px;height:19.6px;background:#9349ed;"></div>
<div class="t" style="left:1073px;top:406.18px;font-size:7.3px;color:#7a7a7a;font-weight:normal;transform:scaleX(0.882);transform-origin:0 0;">Rectangle</div>
<div style="position:absolute;left:1179.2px;top:393.3px;width:1px;height:30.7px;background:#2e2e2e;"></div>
<svg style="position:absolute;left:1027px;top:374px;" width="6" height="8" viewBox="0 0 6 8"><circle cx="1.5" cy="1.5" r="1.1" fill="#ddd"/><circle cx="4.5" cy="3.5" r="1.1" fill="#ddd"/><circle cx="1.5" cy="5.5" r="1.1" fill="#ddd"/><circle cx="4.5" cy="6.8" r="1.1" fill="#ddd"/></svg>
<svg style="position:absolute;left:1184.5px;top:375.5px;" width="9" height="6" viewBox="0 0 9 6"><path d="M0.5 3q4-4.5 8 0q-4 4.5-8 0z" fill="#fff"/><circle cx="4.5" cy="3" r="1.4" fill="#333"/></svg>
<svg style="position:absolute;left:1027px;top:404.5px;" width="6" height="8" viewBox="0 0 6 8"><circle cx="1.5" cy="1.5" r="1.1" fill="#ddd"/><circle cx="4.5" cy="3.5" r="1.1" fill="#ddd"/><circle cx="1.5" cy="5.5" r="1.1" fill="#ddd"/><circle cx="4.5" cy="6.8" r="1.1" fill="#ddd"/></svg>
<svg style="position:absolute;left:1184.5px;top:406.0px;" width="9" height="6" viewBox="0 0 9 6"><path d="M0.5 3q4-4.5 8 0q-4 4.5-8 0z" fill="#fff"/><circle cx="4.5" cy="3" r="1.4" fill="#333"/></svg>
<div style="position:absolute;left:1025px;top:424px;width:175px;height:207.4px;background:#1c1c1c;"></div>
<div style="position:absolute;left:1025px;top:631.4px;width:175px;height:30.6px;background:#2e2e2e;"></div>
<div style="position:absolute;left:1027px;top:634.6px;width:172px;height:2px;background:#707070;border-radius:1px;"></div>
<svg style="position:absolute;left:1029px;top:647px;" width="11" height="11" viewBox="0 0 11 11"><rect x="0.5" y="2" width="9" height="8.5" fill="none" stroke="#888" stroke-width="1"/><path d="M3.5 7.5l6-6" stroke="#aaa" stroke-width="1.4"/></svg>
<div style="position:absolute;left:1071.7px;top:648px;width:10.5px;height:10px;background:#e4e4e4;"></div>
<div class="t" style="left:1072.7px;top:650.02px;font-size:6.6px;color:#333;font-weight:bold;transform:scaleX(1.008);transform-origin:0 0;">FX</div>
<div style="position:absolute;left:1085.8px;top:648px;width:10.5px;height:10px;background:#e4e4e4;"></div>
<div style="position:absolute;left:1088.1px;top:650.3px;width:5.8px;height:5.8px;background:#222;border-radius:50%;"></div>
<svg style="position:absolute;left:1099.5px;top:648px;" width="10" height="10" viewBox="0 0 10 10"><path d="M0 0h10L6 5l4 5H0l4-5z" fill="#e4e4e4"/></svg>
<svg style="position:absolute;left:1112.7px;top:647.5px;" width="11" height="11" viewBox="0 0 11 11"><circle cx="5.3" cy="5.3" r="4.6" fill="#ddd" stroke="#ddd" stroke-width="1"/><path d="M5.3 .7A4.6 4.6 0 0 0 2 9z" fill="#2e2e2e"/></svg>
<svg style="position:absolute;left:1142.5px;top:647.5px;" width="11" height="11" viewBox="0 0 11 11"><rect x="0.5" y="0.5" width="10" height="10" fill="none" stroke="#bbb" stroke-width="1"/><circle cx="4.5" cy="5" r="2.5" fill="#ddd"/><circle cx="7" cy="7" r="2" fill="#ddd"/></svg>
<svg style="position:absolute;left:1156.5px;top:648px;" width="11" height="10" viewBox="0 0 11 10"><path d="M0.5 1.5h4l1 1.5h5v6.5h-10z" fill="none" stroke="#aaa" stroke-width="1"/></svg>
<svg style="position:absolute;left:1171px;top:648px;" width="10" height="10" viewBox="0 0 10 10"><rect x="0" y="0" width="2" height="2" fill="#ddd"/><rect x="0" y="4" width="2" height="2" fill="#ddd"/><rect x="0" y="8" width="2" height="2" fill="#ddd"/><rect x="2" y="2" width="2" height="2" fill="#ddd"/><rect x="2" y="6" width="2" height="2" fill="#ddd"/><rect x="4" y="0" width="2" height="2" fill="#ddd"/><rect x="4" y="4" width="2" height="2" fill="#ddd"/><rect x="4" y="8" width="2" height="2" fill="#ddd"/><rect x="6" y="2" width="2" height="2" fill="#ddd"/><rect x="6" y="6" width="2" height="2" fill="#ddd"/><rect x="8" y="0" width="2" height="2" fill="#ddd"/><rect x="8" y="4" width="2" height="2" fill="#ddd"/><rect x="8" y="8" width="2" height="2" fill="#ddd"/></svg>
<svg style="position:absolute;left:1185.5px;top:647px;" width="9" height="11" viewBox="0 0 9 11"><path d="M0 2h9M3 2V.7h3V2M1 2.5l.7 8h5.6l.7-8" fill="none" stroke="#aaa" stroke-width="1"/><path d="M3.5 4v5M5.5 4v5" stroke="#aaa" stroke-width=".8"/></svg>
<div style="position:absolute;left:0px;top:662px;width:1200px;height:13px;background:#2e2e2e;"></div>
<div style="position:absolute;left:0px;top:661.5px;width:1200px;height:1px;background:#161616;"></div>
<svg style="position:absolute;left:3px;top:665px;" width="10" height="7" viewBox="0 0 10 7"><rect x="0" y="0" width="1.2" height="7" fill="#555"/><path d="M6 0v7L1.5 3.5z" fill="#555"/></svg>
<svg style="position:absolute;left:16px;top:665px;" width="6" height="7" viewBox="0 0 6 7"><path d="M5 0v7L0.5 3.5z" fill="#4a4a4a"/></svg>
<div style="position:absolute;left:28px;top:663px;width:62px;height:12px;background:#1f1f1f;border-radius:3px;"></div>
<div class="t" style="left:51.5px;top:665.42px;font-size:6.8px;color:#fff;font-weight:normal;transform:scaleX(0.882);transform-origin:0 0;">1 of 1</div>
<svg style="position:absolute;left:91px;top:665px;" width="6" height="7" viewBox="0 0 6 7"><path d="M0.5 0v7L5.5 3.5z" fill="#e0e0e0"/></svg>
<svg style="position:absolute;left:103px;top:665px;" width="9" height="7" viewBox="0 0 9 7"><path d="M0.5 0v7L5.5 3.5z" fill="#4a4a4a"/><rect x="6.5" y="0" width="1.2" height="7" fill="#4a4a4a"/></svg>
<svg style="position:absolute;left:115px;top:664.5px;" width="8" height="9" viewBox="0 0 8 9"><rect x="0.5" y="0.5" width="6" height="8" fill="#444"/></svg>
<svg style="position:absolute;left:137px;top:664.5px;" width="10" height="10" viewBox="0 0 10 10"><rect x="0.5" y="0.5" width="6" height="7" fill="none" stroke="#ddd" stroke-width=".9"/><rect x="3" y="2.5" width="6" height="7" fill="#2e2e2e" stroke="#ddd" stroke-width=".9"/></svg>
<svg style="position:absolute;left:150px;top:664.5px;" width="8" height="10" viewBox="0 0 8 10"><rect x="0.5" y="0.5" width="7" height="9" fill="#555"/><path d="M4 .5v9" stroke="#333" stroke-width=".8"/></svg>
<div class="t" style="left:174.5px;top:665.52px;font-size:6.8px;color:#cfcfcf;font-weight:normal;transform:scaleX(0.987);transform-origin:0 0;">Mouse over an object to get measurements.</div>
<div class="t" style="left:308.5px;top:665.52px;font-size:6.8px;color:#fff;font-weight:bold;transform:scaleX(0.984);transform-origin:0 0;">Click</div>
<div class="t" style="left:326.5px;top:665.52px;font-size:6.8px;color:#cfcfcf;font-weight:normal;transform:scaleX(1.024);transform-origin:0 0;">an object to select it.</div>
<div style="position:absolute;left:1034px;top:662px;width:1px;height:13px;background:#111;"></div>
<div class="t" style="left:1038.7px;top:665.62px;font-size:6.8px;color:#f0f0f0;font-weight:normal;transform:scaleX(1.005);transform-origin:0 0;">&lt;Untitled&gt; (80.6%)</div>
<svg style="position:absolute;left:1190.5px;top:665.3px;" width="6" height="6" viewBox="0 0 6 6"><path d="M3 0.2v5.6M0.6 1.6l4.8 2.8M0.6 4.4l4.8-2.8" stroke="#bbb" stroke-width=".8"/></svg>
</body></html>
